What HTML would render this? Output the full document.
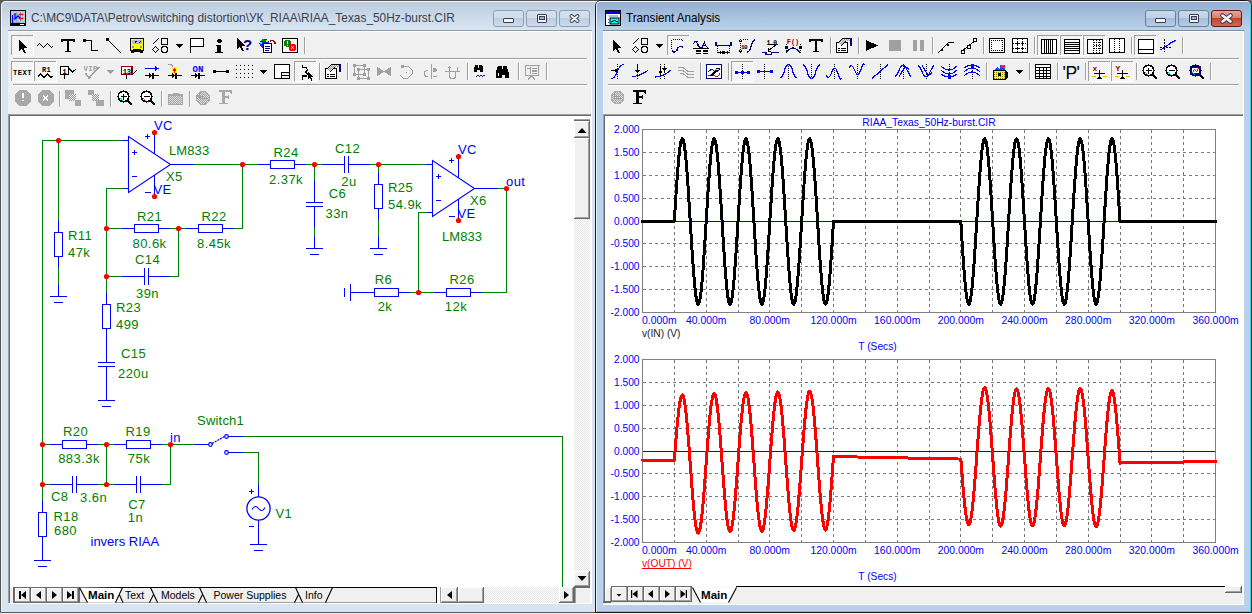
<!DOCTYPE html>
<html><head><meta charset="utf-8"><style>
html,body{margin:0;padding:0;}
body{width:1252px;height:614px;position:relative;overflow:hidden;background:#f0f0f0;font-family:'Liberation Sans', sans-serif;}
</style></head><body>
<div style="position:absolute;left:0;top:0;width:8px;height:8px;background:#5a5a5a"></div>
<div style="position:absolute;left:590px;top:0;width:12px;height:8px;background:#3a3a3a"></div>
<div style="position:absolute;left:1244px;top:0;width:8px;height:8px;background:#6a6a6a"></div>
<div style="position:absolute;left:0;top:0;width:620px;height:613px;box-sizing:border-box;border:1px solid #555;border-radius:6px 6px 0 0;background:#d9e4f1"></div>
<div style="position:absolute;left:1px;top:1px;width:618px;height:611px;box-sizing:border-box;border:1px solid #f2f6fb;border-bottom:none;border-radius:5px 5px 0 0"></div>
<div style="position:absolute;left:2px;top:2px;width:616px;height:28px;background:linear-gradient(#bdcddf,#d8e5f2);border-radius:4px 4px 0 0"></div>
<div style="position:absolute;left:8px;top:30px;width:584px;height:574px;background:#f0f0f0"></div>
<div style="position:absolute;left:8px;top:30px;width:584px;height:1px;background:#8e9aa8"></div>
<div style="position:absolute;left:8px;top:31px;width:584px;height:1px;background:#fff"></div>
<svg style="position:absolute;left:10px;top:10px" width="17" height="16">
<rect x="0.5" y="0.5" width="15" height="15" fill="#d4d0c8" stroke="#000"/>
<rect x="1" y="1" width="14" height="14" fill="#c8c8c8"/>
<path d="M3 4.5H14M3 8.5H14M3 12.5H10M6.5 2V14M10.5 2V12" stroke="#8ca0c0" stroke-width="1"/>
<path d="M2.5 5V13M5 3L5 9L8 6L11 9" stroke="#00f" fill="none" stroke-width="1.3"/>
<path d="M9 4.5H13M9 8.5H13" stroke="#f00" stroke-width="1.3"/>
<rect x="0" y="13" width="16" height="3" fill="#000"/><rect x="10" y="14" width="4" height="1" fill="#fff"/>
</svg>
<div style="position:absolute;left:31px;top:9.5px;font-family:'Liberation Sans', sans-serif;font-size:13.3px;color:#3d3d4a;white-space:pre;transform:scaleX(0.893);transform-origin:0 0">C:\MC9\DATA\Petrov\switching distortion\УК_RIAA\RIAA_Texas_50Hz-burst.CIR</div>
<div style="position:absolute;left:493px;top:10px;width:31px;height:17px;box-sizing:border-box;border:1px solid #8d9db5;border-radius:3px;background:linear-gradient(#d5e1ee 0%,#cfdcea 45%,#bccee2 50%,#cddcec 100%)"></div>
<div style="position:absolute;left:503px;top:18px;width:11px;height:5px;box-sizing:border-box;border:1px solid #3a3e55;background:#f4f4f4;border-radius:1px"></div>
<div style="position:absolute;left:526px;top:10px;width:31px;height:17px;box-sizing:border-box;border:1px solid #8d9db5;border-radius:3px;background:linear-gradient(#d5e1ee 0%,#cfdcea 45%,#bccee2 50%,#cddcec 100%)"></div>
<div style="position:absolute;left:537px;top:14px;width:10px;height:9px;box-sizing:border-box;border:1px solid #3a3e55;background:#f4f4f4;border-radius:1px"></div>
<div style="position:absolute;left:539px;top:16px;width:6px;height:4px;box-sizing:border-box;border:1px solid #3a3e55;background:#9db4d0"></div>
<div style="position:absolute;left:559px;top:10px;width:31px;height:17px;box-sizing:border-box;border:1px solid #8d9db5;border-radius:3px;background:linear-gradient(#d5e1ee 0%,#cfdcea 45%,#bccee2 50%,#cddcec 100%)"></div>
<svg style="position:absolute;left:567px;top:12px" width="15" height="13"><path d="M4.5 4 L10.5 9 M10.5 4 L4.5 9" stroke="#3a3e55" stroke-width="3.8" stroke-linecap="round"/><path d="M4.5 4 L10.5 9 M10.5 4 L4.5 9" stroke="#f4f4f4" stroke-width="2.0" stroke-linecap="round"/></svg>
<div style="position:absolute;left:595px;top:0;width:657px;height:613px;box-sizing:border-box;border:1px solid #1a1a1a;border-radius:6px 6px 0 0;background:#b9d1ea"></div>
<div style="position:absolute;left:596px;top:1px;width:655px;height:611px;box-sizing:border-box;border:1px solid #eaf2fb;border-right-color:#40d4ec;border-bottom-color:#40d4ec;border-radius:5px 5px 0 0"></div>
<div style="position:absolute;left:597px;top:2px;width:653px;height:28px;background:linear-gradient(#93aed0,#bad3ed);border-radius:4px 4px 0 0"></div>
<div style="position:absolute;left:603px;top:30px;width:641px;height:574px;background:#f0f0f0"></div>
<div style="position:absolute;left:603px;top:30px;width:641px;height:1px;background:#7e8b99"></div>
<div style="position:absolute;left:603px;top:31px;width:641px;height:1px;background:#fff"></div>
<svg style="position:absolute;left:605px;top:10px" width="17" height="16">
<rect x="0.5" y="0.5" width="15" height="15" fill="#fff" stroke="#000"/>
<rect x="1" y="1" width="14" height="3" fill="#0000e0"/>
<path d="M3.5 6H13" stroke="#808080"/>
<rect x="5" y="8" width="9" height="6" fill="#00ffff" stroke="#000" stroke-width="1"/>
<path d="M6 12Q9 9 13 12" stroke="#000" fill="none"/>
<path d="M3 9.5h1M3 12.5h1" stroke="#606060"/>
</svg>
<div style="position:absolute;left:626px;top:9.5px;font-family:'Liberation Sans', sans-serif;font-size:13.3px;color:#000;white-space:pre;transform:scaleX(0.877);transform-origin:0 0">Transient Analysis</div>
<div style="position:absolute;left:1145px;top:10px;width:31px;height:17px;box-sizing:border-box;border:1px solid #6b7f99;border-radius:3px;background:linear-gradient(#c9d9ec 0%,#bfd1e7 45%,#a6bed9 50%,#b8cde4 100%)"></div>
<div style="position:absolute;left:1155px;top:18px;width:11px;height:5px;box-sizing:border-box;border:1px solid #3a3e55;background:#f4f4f4;border-radius:1px"></div>
<div style="position:absolute;left:1178px;top:10px;width:31px;height:17px;box-sizing:border-box;border:1px solid #6b7f99;border-radius:3px;background:linear-gradient(#c9d9ec 0%,#bfd1e7 45%,#a6bed9 50%,#b8cde4 100%)"></div>
<div style="position:absolute;left:1189px;top:14px;width:10px;height:9px;box-sizing:border-box;border:1px solid #3a3e55;background:#f4f4f4;border-radius:1px"></div>
<div style="position:absolute;left:1191px;top:16px;width:6px;height:4px;box-sizing:border-box;border:1px solid #3a3e55;background:#9db4d0"></div>
<div style="position:absolute;left:1211px;top:10px;width:31px;height:17px;box-sizing:border-box;border:1px solid #5d1c15;border-radius:3px;background:linear-gradient(#e8a593 0%,#d98068 45%,#c0462c 50%,#d0684c 100%)"></div>
<svg style="position:absolute;left:1219px;top:12px" width="15" height="13"><path d="M3.5 3.5 L11.5 9.5 M11.5 3.5 L3.5 9.5" stroke="#3a3e55" stroke-width="4.6" stroke-linecap="round"/><path d="M3.5 3.5 L11.5 9.5 M11.5 3.5 L3.5 9.5" stroke="#f4f4f4" stroke-width="2.6" stroke-linecap="round"/></svg>
<svg width="1252" height="120" style="position:absolute;left:0;top:0" font-family="'Liberation Sans', sans-serif" shape-rendering="crispEdges"><defs><pattern id="chk" width="2" height="2" patternUnits="userSpaceOnUse"><rect width="2" height="2" fill="#ffffff"/><rect width="1" height="1" fill="#ececec"/><rect x="1" y="1" width="1" height="1" fill="#ececec"/></pattern>
<pattern id="chkg" width="2" height="2" patternUnits="userSpaceOnUse"><rect width="2" height="2" fill="#a0a0a0"/><rect width="1" height="1" fill="#e0e0e0"/><rect x="1" y="1" width="1" height="1" fill="#e0e0e0"/></pattern>
<pattern id="chky" width="2" height="2" patternUnits="userSpaceOnUse"><rect width="2" height="2" fill="#ffff00"/><rect width="1" height="1" fill="#808000"/></pattern></defs><rect x="13" y="58" width="574" height="1" fill="#a0a0a0"/><rect x="13" y="59" width="574" height="1" fill="#fff"/><rect x="13" y="84" width="574" height="1" fill="#a0a0a0"/><rect x="13" y="85" width="574" height="1" fill="#fff"/><rect x="11" y="35" width="23" height="21" fill="url(#chk)"/><rect x="11" y="35" width="22" height="1" fill="#a0a0a0"/><rect x="11" y="35" width="1" height="20" fill="#a0a0a0"/><rect x="11" y="55" width="23" height="1" fill="#fff"/><rect x="33" y="35" width="1" height="21" fill="#fff"/><path d="M19 40v11l2.5-2.5l2.5 5l2-1l-2.5-4.5h3.5z" fill="#000"/><path d="M37 46L39.5 43.5L43.5 47.5L47.5 43.5L51.5 47.5L53 46" stroke="#000" stroke-width="1.1" fill="none" /><path d="M61 39h14v3.3h-1.6l-0.6-1h-3.6v9.5h2.2v1.5h-6.6v-1.5h2.2v-9.5h-3.6l-0.6 1h-1.4z" fill="#000"/><rect x="83" y="39" width="3" height="3" fill="#000"/><path d="M86 40.5h5.5v10h6.5" stroke="#000" stroke-width="1.2" fill="none" /><rect x="106" y="38" width="3" height="3" fill="#000"/><path d="M108.5 40.5L121 53" stroke="#000" stroke-width="1.1" fill="none" /><rect x="130.5" y="38.5" width="13" height="12.5" rx="1.5" fill="#ffff00" stroke="#000" stroke-width="1.3"/><rect x="132" y="40" width="10" height="4" fill="#b8b8d0"/><path d="M133.5 43l1.5-1.5h1.5M138 43l1.5-1.5h1.5" stroke="#000" stroke-width="0.9" fill="none" /><rect x="132" y="46" width="2" height="1.5" fill="#9090c0"/><rect x="140" y="46" width="2" height="1.5" fill="#9090c0"/><rect x="133" y="48.5" width="8" height="1" fill="#000"/><rect x="131" y="51" width="3" height="2" fill="#000"/><rect x="140" y="51" width="3" height="2" fill="#000"/><path d="M152.5 44.5L158.5 38.5" stroke="#000" stroke-width="1.1" fill="none" /><rect x="161.5" y="38.5" width="6" height="6" fill="none" stroke="#000" stroke-width="1.1"/><path d="M155.5 46.5l3 3l-3 3l-3-3z" stroke="#000" stroke-width="1.1" fill="none" /><circle cx="164.5" cy="49.5" r="3.2" fill="none" stroke="#000" stroke-width="1.1"/><path d="M176 44h7l-3.5 4z" fill="#000"/><path d="M190.5 38v15" stroke="#000" stroke-width="1.2" fill="none" /><rect x="190.5" y="38.5" width="13" height="8" fill="#fff" stroke="#000" stroke-width="1.2"/><circle cx="219.5" cy="40.8" r="2.3" fill="#000"/><path d="M216 44.5h5v7h2v1.8h-8v-1.8h1.6v-5.2h-0.6z" fill="#000"/><path d="M237 38v11l2.5-2.5l2.5 5l2-1l-2.5-4.5h3.5z" fill="#000"/><text x="247.5" y="50" fill="#000080" font-size="15" font-weight="bold" letter-spacing="0" text-anchor="middle" font-family="'Liberation Sans', sans-serif">?</text><circle cx="264.5" cy="43.5" r="5" fill="#0030d0"/><path d="M261 41q2-2 4 0M263 45q2 1 3 3" stroke="#00a000" stroke-width="1.6" fill="none" /><rect x="266" y="39.5" width="2" height="2" fill="#ffff00"/><rect x="260" y="42" width="2" height="1.5" fill="#00ffff"/><rect x="263.5" y="43.5" width="8" height="9" fill="#fff" stroke="#000" stroke-width="1"/><path d="M265 46.5h5M265 48.5h5M265 50.5h4" stroke="#000080" stroke-width="1" fill="none" shape-rendering="crispEdges"/><path d="M270 41.5q2.5-2 4.5 0.5" stroke="#a00000" stroke-width="1.3" fill="none" /><path d="M273 43l3-1.5l-0.5 3z" fill="#a00000"/><rect x="282.5" y="38.5" width="15" height="14" fill="#f4f4f4" stroke="#000" stroke-width="1.6"/><circle cx="287.5" cy="43.3" r="3.6" fill="#008000"/><rect x="287" y="40.5" width="1.2" height="3.5" fill="#fff"/><rect x="287" y="45" width="1.2" height="1" fill="#fff"/><circle cx="292.5" cy="47.5" r="3.6" fill="#ff0000"/><path d="M291 46l3 3M294 46l-3 3" stroke="#fff" stroke-width="0.9" fill="none" /><rect x="304" y="37" width="1" height="17" fill="#a0a0a0"/><rect x="305" y="37" width="1" height="17" fill="#fff"/><rect x="11" y="61" width="23" height="21" fill="url(#chk)"/><rect x="11" y="61" width="22" height="1" fill="#a0a0a0"/><rect x="11" y="61" width="1" height="20" fill="#a0a0a0"/><rect x="11" y="81" width="23" height="1" fill="#fff"/><rect x="33" y="61" width="1" height="21" fill="#fff"/><rect x="34" y="61" width="23" height="21" fill="url(#chk)"/><rect x="34" y="61" width="22" height="1" fill="#a0a0a0"/><rect x="34" y="61" width="1" height="20" fill="#a0a0a0"/><rect x="34" y="81" width="23" height="1" fill="#fff"/><rect x="56" y="61" width="1" height="21" fill="#fff"/><text x="22.5" y="75.3" fill="#000" font-size="7.2" font-weight="bold" letter-spacing="0.4" text-anchor="middle" font-family="'Liberation Mono', monospace">TEXT</text><text x="46.5" y="71.8" fill="#000" font-size="7" font-weight="bold" letter-spacing="0.2" text-anchor="middle" font-family="'Liberation Mono', monospace">R1</text><path d="M38 76.5L40.5 74L44 77.5L47.5 74L51 77.5L53.5 75.5" stroke="#000" stroke-width="1" fill="none" /><rect x="60.5" y="66.5" width="8" height="8" fill="#fff" stroke="#000" stroke-width="1.1"/><text x="64.6" y="73.6" fill="#000" font-size="7.5" font-weight="bold" letter-spacing="0" text-anchor="middle" font-family="'Liberation Mono', monospace">1</text><path d="M64.5 75v4" stroke="#000" stroke-width="1.2" fill="none" /><path d="M69 68.5l3.5 3.5l3.5-3" stroke="#000" stroke-width="1" fill="none" /><text x="83.5" y="70.6" fill="#a0a0a0" font-size="7.5" font-weight="bold" letter-spacing="0.3" text-anchor="start" font-family="'Liberation Mono', monospace">VIP</text><path d="M85.5 73.5l3.5 4.5l10-11" stroke="#a0a0a0" stroke-width="1.6" fill="none" /><path d="M107 70h7l-3.5 4z" fill="#a0a0a0"/><rect x="121.5" y="66.5" width="10.5" height="8" fill="#fff" stroke="#800000" stroke-width="1.1"/><text x="126.8" y="73.6" fill="#000" font-size="7.3" font-weight="bold" letter-spacing="-0.4" text-anchor="middle" font-family="'Liberation Mono', monospace">13</text><path d="M126.5 75v4" stroke="#000" stroke-width="1.2" fill="none" /><path d="M132 75l5-5" stroke="#000" stroke-width="1" fill="none" /><path d="M145 68.5h12" stroke="#0000ff" stroke-width="1.3" fill="none" /><path d="M155 66l4 2.5l-4 2.5z" fill="#0000ff"/><path d="M145 75.5h14" stroke="#000" stroke-width="1.2" fill="none" /><path d="M149.0 73.0v5l3.5-2.5z" fill="#000"/><path d="M153.0 72.5v6" stroke="#000" stroke-width="1.3" fill="none" /><path d="M168 64.5h3l2 1.5" stroke="#a0a0a0" stroke-width="1.5" fill="none" /><ellipse cx="174.5" cy="70" rx="2.8" ry="3.5" fill="#ffff00"/><path d="M174.5 67.5l1.8 2.5l-1.8 2.5l-1.8-2.5z" fill="#ff0000"/><path d="M168 75.5h14" stroke="#000" stroke-width="1.2" fill="none" /><path d="M172.0 73.0v5l3.5-2.5z" fill="#000"/><path d="M176.0 72.5v6" stroke="#000" stroke-width="1.3" fill="none" /><text x="198" y="71.8" fill="#0000ff" font-size="9" font-weight="bold" letter-spacing="0.2" text-anchor="middle" font-family="'Liberation Mono', monospace">ON</text><path d="M191 75.5h14" stroke="#000" stroke-width="1.2" fill="none" /><path d="M195.0 73.0v5l3.5-2.5z" fill="#000"/><path d="M199.0 72.5v6" stroke="#000" stroke-width="1.3" fill="none" /><rect x="213" y="70" width="3" height="3" fill="#000"/><rect x="226" y="70" width="3" height="3" fill="#000"/><rect x="216" y="71" width="10" height="1" fill="#000"/><rect x="236" y="65" width="1" height="1" fill="#000"/><rect x="236" y="69" width="1" height="1" fill="#000"/><rect x="236" y="73" width="1" height="1" fill="#000"/><rect x="236" y="77" width="1" height="1" fill="#000"/><rect x="240" y="65" width="1" height="1" fill="#000"/><rect x="240" y="69" width="1" height="1" fill="#000"/><rect x="240" y="73" width="1" height="1" fill="#000"/><rect x="240" y="77" width="1" height="1" fill="#000"/><rect x="244" y="65" width="1" height="1" fill="#000"/><rect x="244" y="69" width="1" height="1" fill="#000"/><rect x="244" y="73" width="1" height="1" fill="#000"/><rect x="244" y="77" width="1" height="1" fill="#000"/><rect x="248" y="65" width="1" height="1" fill="#000"/><rect x="248" y="69" width="1" height="1" fill="#000"/><rect x="248" y="73" width="1" height="1" fill="#000"/><rect x="248" y="77" width="1" height="1" fill="#000"/><rect x="252" y="65" width="1" height="1" fill="#000"/><rect x="252" y="69" width="1" height="1" fill="#000"/><rect x="252" y="73" width="1" height="1" fill="#000"/><rect x="252" y="77" width="1" height="1" fill="#000"/><path d="M260 70h7l-3.5 4z" fill="#000"/><rect x="274.5" y="64.5" width="15" height="14" fill="#fff" stroke="#000" stroke-width="1.6"/><rect x="281.5" y="72.5" width="8" height="6" fill="#f0f0f0" stroke="#000" stroke-width="1.1"/><path d="M281 75.5h8" stroke="#000" stroke-width="1.1" fill="none" /><rect x="294" y="61" width="23" height="21" fill="url(#chk)"/><rect x="294" y="61" width="22" height="1" fill="#a0a0a0"/><rect x="294" y="61" width="1" height="20" fill="#a0a0a0"/><rect x="294" y="81" width="23" height="1" fill="#fff"/><rect x="316" y="61" width="1" height="21" fill="#fff"/><path d="M302.5 65v2.5h3.5l1.5 2.5l-2 2l2 2l-1 2h-4v4" stroke="#000" stroke-width="1.1" fill="none" /><path d="M308 72v7.5l1.8-1.8l1.8 3l1.2-0.7l-1.7-2.8h2.6z" fill="#000"/><rect x="319" y="63" width="1" height="17" fill="#a0a0a0"/><rect x="320" y="63" width="1" height="17" fill="#fff"/><rect x="325.5" y="68.5" width="11" height="10" fill="#fff" stroke="#000" stroke-width="1.6"/><path d="M327 74.5h2M330 74.5h5M327 76.5h2M330 76.5h5" stroke="#000" stroke-width="1" fill="none" /><path d="M327 69l5-5h7v3h-4l-5 5z" fill="url(#chkg)"/><path d="M327 69l5-5h7M330 72l5-5" stroke="#000" stroke-width="1" fill="none" /><rect x="338.5" y="64" width="2.5" height="8" fill="#000080"/><rect x="347" y="63" width="1" height="17" fill="#a0a0a0"/><rect x="348" y="63" width="1" height="17" fill="#fff"/><rect x="353" y="64" width="3" height="3" fill="#a0a0a0"/><rect x="363" y="64" width="3" height="3" fill="#a0a0a0"/><rect x="353" y="73" width="3" height="3" fill="#a0a0a0"/><rect x="363" y="73" width="3" height="3" fill="#a0a0a0"/><rect x="357" y="68" width="3" height="3" fill="#a0a0a0"/><rect x="367" y="68" width="3" height="3" fill="#a0a0a0"/><rect x="357" y="77" width="3" height="3" fill="#a0a0a0"/><rect x="367" y="77" width="3" height="3" fill="#a0a0a0"/><path d="M354.5 65.5h10v9h-10zM358.5 69.5h10v9h-10z" stroke="#a0a0a0" stroke-width="1" fill="none" /><path d="M377 71.5h14M378 68v7l5-3.5zM390 68v7l-5-3.5z" stroke="#a0a0a0" stroke-width="1.1" fill="none" /><path d="M378 68v7l5-3.5zM390 68v7l-5-3.5z" fill="#a0a0a0"/><path d="M402 65.5l2 2M403 66h5l4 4v4l-4 4h-5l-3-3" stroke="#a0a0a0" stroke-width="1" fill="none" /><rect x="401" y="65" width="3" height="3" fill="#a0a0a0"/><rect x="405.5" y="71.5" width="1.5" height="1.5" fill="#a0a0a0"/><path d="M431.5 63.5v15M428 70.5h-1.5l-2 1.5v3l1.5 1.5h2M433 70h2M434 68l3 2l-3 2z" stroke="#a0a0a0" stroke-width="1" fill="none" /><path d="M433 68l4 2l-4 2z" fill="#a0a0a0"/><path d="M433 76h4" stroke="#a0a0a0" stroke-width="1" fill="none" /><path d="M445 71.5h15M449.5 71v6l1.5 1.5h3l1.5-1.5v-5M449.5 71v-4M447.5 68.5l2-2l2 2M457 67v4" stroke="#a0a0a0" stroke-width="1" fill="none" /><rect x="467" y="63" width="1" height="17" fill="#a0a0a0"/><rect x="468" y="63" width="1" height="17" fill="#fff"/><path d="M474 71.5v-3.5l1.5-3.5h2.5v3h1.2v-3h2.5l1.5 3.5v3.5h-3.2v-1.8h-2.8v1.8z" fill="#000"/><path d="M476 76.5l1.5-1l1.5 1l1.5-1l1.5 1l1.5-1l1.5 1" stroke="#000080" stroke-width="0.9" fill="none" /><path d="M496 77.5v-6l2-6h3.5v3h1.5v-3h3.5l2 6v6h-4v-2.5h-2.5v2.5z" fill="#000"/><rect x="497.5" y="73" width="1" height="3" fill="#fff"/><rect x="509" y="73" width="1" height="3" fill="#fff"/><rect x="518" y="63" width="1" height="17" fill="#a0a0a0"/><rect x="519" y="63" width="1" height="17" fill="#fff"/><path d="M524.5 65.5h15M525.5 65.5v10h13v-10M526.5 68.5h3M530.5 67v7M532 68.5h5M532 71h5M532 73.5h5M528 79l3.5-3l3.5 3" stroke="#a0a0a0" stroke-width="1.5" fill="none" /><rect x="546" y="63" width="1" height="17" fill="#a0a0a0"/><rect x="547" y="63" width="1" height="17" fill="#fff"/><path d="M19.0 90h7l4.5 4.5v7l-4.5 4.5h-7l-4.5-4.5v-7z" fill="#a8a8a8"/><rect x="21.5" y="93" width="2" height="5" fill="#fff"/><rect x="21.5" y="99.5" width="2" height="1.5" fill="#fff"/><path d="M42.0 90h7l4.5 4.5v7l-4.5 4.5h-7l-4.5-4.5v-7z" fill="#a8a8a8"/><path d="M43 95.5l5 5M48 95.5l-5 5" stroke="#fff" stroke-width="1.5" fill="none" /><rect x="59" y="91" width="1" height="16" fill="#a0a0a0"/><rect x="60" y="91" width="1" height="16" fill="#fff"/><path d="M65 90h9v4h-4v5h-5z" fill="#a8a8a8"/><rect x="69" y="94" width="7" height="7" fill="url(#chkg)"/><rect x="75" y="100" width="6" height="6" fill="#a8a8a8"/><path d="M88 90h6v5h-6z" fill="#a8a8a8"/><rect x="92" y="94" width="7" height="7" fill="url(#chkg)"/><path d="M96 100h7.5v6h-7.5z" fill="#a8a8a8"/><rect x="110" y="91" width="1" height="16" fill="#a0a0a0"/><rect x="111" y="91" width="1" height="16" fill="#fff"/><circle cx="123.5" cy="96.5" r="5.3" fill="#fff" stroke="#000" stroke-width="1.6"/><path d="M127.0 100.0L132 105" stroke="#000" stroke-width="2.4" fill="none" /><path d="M120.5 96.5h6M123.5 93.5v6" stroke="#000" stroke-width="1.8" fill="none" /><path d="M120.0 98.0q1 2 3 2.5" stroke="#00c0e0" stroke-width="1" fill="none" /><circle cx="146.5" cy="96.5" r="5.3" fill="#fff" stroke="#000" stroke-width="1.6"/><path d="M150.0 100.0L155 105" stroke="#000" stroke-width="2.4" fill="none" /><path d="M143.5 96.5h6" stroke="#000" stroke-width="1.8" fill="none" /><path d="M143.0 98.0q1 2 3 2.5" stroke="#00c0e0" stroke-width="1" fill="none" /><rect x="161" y="91" width="1" height="16" fill="#a0a0a0"/><rect x="162" y="91" width="1" height="16" fill="#fff"/><path d="M168 94h5l1-1.5h4l1 1.5h4v11h-15z" fill="#a8a8a8"/><rect x="169" y="95.5" width="13" height="8" fill="url(#chkg)"/><rect x="189" y="91" width="1" height="16" fill="#a0a0a0"/><rect x="190" y="91" width="1" height="16" fill="#fff"/><circle cx="203" cy="98" r="6.5" fill="url(#chkg)" stroke="#a8a8a8" stroke-width="1.2"/><path d="M199 92.5v6h8M197.5 96h6" stroke="#a0a0a0" stroke-width="1" fill="none" /><path d="M219 90H232V94H230.8L230.2 92H225V96H227.8L228.2 95H229.2V99.2H228.2L227.8 98H225V102.5H227.5V104H219V102.5H221.5V92H219Z" fill="#a8a8a8"/><rect x="608" y="58" width="631" height="1" fill="#a0a0a0"/><rect x="608" y="59" width="631" height="1" fill="#fff"/><rect x="608" y="84" width="631" height="1" fill="#a0a0a0"/><rect x="608" y="85" width="631" height="1" fill="#fff"/><path d="M613 40v11l2.5-2.5l2.5 5l2-1l-2.5-4.5h3.5z" fill="#000"/><path d="M632.5 44.5L638.5 38.5" stroke="#000" stroke-width="1.1" fill="none" /><rect x="641.5" y="38.5" width="6" height="6" fill="none" stroke="#000" stroke-width="1.1"/><path d="M635.5 46.5l3 3l-3 3l-3-3z" stroke="#000" stroke-width="1.1" fill="none" /><circle cx="644.5" cy="49.5" r="3.2" fill="none" stroke="#000" stroke-width="1.1"/><path d="M656 44h7l-3.5 4z" fill="#000"/><rect x="667" y="35" width="23" height="21" fill="url(#chk)"/><rect x="667" y="35" width="22" height="1" fill="#a0a0a0"/><rect x="667" y="35" width="1" height="20" fill="#a0a0a0"/><rect x="667" y="55" width="23" height="1" fill="#fff"/><rect x="689" y="35" width="1" height="21" fill="#fff"/><path d="M671.5 48.5v-9h11v2M671.5 50.5h2M677 50v2" stroke="#000" stroke-width="1" fill="none" stroke-dasharray="1 1"/><path d="M672 50.5q2.5 4 5-1q2.5-5 6-2" stroke="#000080" stroke-width="1.4" fill="none" /><path d="M693.5 44q1.5-4 3.5-1l2.5 4q2 2 3.5-1l1.5-3l1.5 3l2 2" stroke="#000080" stroke-width="1.3" fill="none" /><path d="M697 46v-6M704 46v-6" stroke="#000" stroke-width="1" fill="none" stroke-dasharray="1 1"/><path d="M693 48.5h16M696 51h5M703 51h5" stroke="#000" stroke-width="1.2" fill="none" /><path d="M696 53h5M703 53h5" stroke="#000" stroke-width="1" fill="none" /><path d="M716 41.5v4h15v-4" stroke="#000080" stroke-width="1.3" fill="none" /><path d="M717.5 46v6M729.5 46v6" stroke="#000" stroke-width="1" fill="none" stroke-dasharray="1 1"/><path d="M717 52.5h13M720 51v3M727 51v3" stroke="#000" stroke-width="1" fill="none" /><rect x="722" y="51" width="3" height="3" fill="#000"/><path d="M740.5 41v11M743 39h6" stroke="#000" stroke-width="1" fill="none" stroke-dasharray="1 1"/><text x="744" y="49" fill="#000" font-size="6" font-weight="bold" letter-spacing="-0.5" text-anchor="middle" font-family="'Liberation Mono', monospace">10</text><path d="M747 52.5q3-1 4-6t4-7" stroke="#000080" stroke-width="1.3" fill="none" /><path d="M739 41.5l1.5-2l1.5 2M739 50.5l1.5 2l1.5-2" stroke="#000" stroke-width="1" fill="none" /><text x="771.5" y="44.5" fill="#000" font-size="6.5" font-weight="bold" letter-spacing="-0.5" text-anchor="middle" font-family="'Liberation Mono', monospace">1.0</text><path d="M768 44.5h10M776 45l-8 6M768 51v-3M768 51h3" stroke="#000" stroke-width="1" fill="none" /><path d="M762 52.5h4v2h5.5v-2h7" stroke="#000080" stroke-width="1.2" fill="none" /><text x="793" y="44" fill="#a00000" font-size="7" font-weight="bold" letter-spacing="0" text-anchor="middle" font-family="'Liberation Mono', monospace">F()</text><path d="M786 53q7-10 14 0" stroke="#000080" stroke-width="1.2" fill="none" /><path d="M786.5 44v9M800.5 44v9" stroke="#000" stroke-width="1" fill="none" stroke-dasharray="1 1"/><rect x="785" y="46" width="3" height="3" fill="#000"/><rect x="799" y="46" width="3" height="3" fill="#000"/><path d="M809 39h14v3.3h-1.6l-0.6-1h-3.6v9.5h2.2v1.5h-6.6v-1.5h2.2v-9.5h-3.6l-0.6 1h-1.4z" fill="#000"/><rect x="830" y="37" width="1" height="17" fill="#a0a0a0"/><rect x="831" y="37" width="1" height="17" fill="#fff"/><rect x="836.5" y="42.5" width="11" height="10" fill="#fff" stroke="#000" stroke-width="1.6"/><path d="M838 48.5h2M841 48.5h5M838 50.5h2M841 50.5h5" stroke="#000" stroke-width="1" fill="none" /><path d="M838 43l5-5h7v3h-4l-5 5z" fill="url(#chkg)"/><path d="M838 43l5-5h7M841 46l5-5" stroke="#000" stroke-width="1" fill="none" /><rect x="849.5" y="38" width="2.5" height="8" fill="#000080"/><rect x="858" y="37" width="1" height="17" fill="#a0a0a0"/><rect x="859" y="37" width="1" height="17" fill="#fff"/><path d="M866 40v11l12-5.5z" fill="#000"/><rect x="889" y="40" width="12" height="11" fill="#a0a0a0"/><rect x="913" y="40" width="4" height="11" fill="#a0a0a0"/><rect x="920" y="40" width="4" height="11" fill="#a0a0a0"/><rect x="932" y="37" width="1" height="17" fill="#a0a0a0"/><rect x="933" y="37" width="1" height="17" fill="#fff"/><path d="M938 53l8-8M946 45l2.5-2.5h5.5" stroke="#000" stroke-width="1.1" fill="none" /><rect x="941" y="49" width="2" height="2" fill="#000"/><rect x="946.5" y="43.5" width="2" height="2" fill="#000"/><path d="M962 51l14-11" stroke="#000" stroke-width="1.1" fill="none" /><rect x="961.5" y="50.5" width="3" height="3" fill="#fff" stroke="#000"/><rect x="967.5" y="45.5" width="3" height="3" fill="#fff" stroke="#000"/><rect x="973.5" y="38.5" width="3" height="3" fill="#fff" stroke="#000"/><rect x="983" y="37" width="1" height="17" fill="#a0a0a0"/><rect x="984" y="37" width="1" height="17" fill="#fff"/><rect x="989.5" y="38.5" width="15" height="14" fill="#fff" stroke="#000" stroke-width="1.6"/><path d="M991 40.5h11M991 50.5h11M991.5 40v11M1002.5 40v11" stroke="#000" stroke-width="1" fill="none" stroke-dasharray="1 1"/><rect x="1012.5" y="38.5" width="15" height="14" fill="#fff" stroke="#000" stroke-width="1.6"/><path d="M1017.5 39v13M1022.5 39v13M1013 43.5h14M1013 48.5h14" stroke="#000" stroke-width="1" fill="none" stroke-dasharray="1 1"/><path d="M1016 43.5h3M1021 43.5h3M1016 48.5h3M1021 48.5h3M1017.5 42v3M1022.5 42v3M1017.5 47v3M1022.5 47v3" stroke="#000" stroke-width="1" fill="none" /><rect x="1034" y="37" width="1" height="17" fill="#a0a0a0"/><rect x="1035" y="37" width="1" height="17" fill="#fff"/><rect x="1037" y="35" width="23" height="21" fill="url(#chk)"/><rect x="1037" y="35" width="22" height="1" fill="#a0a0a0"/><rect x="1037" y="35" width="1" height="20" fill="#a0a0a0"/><rect x="1037" y="55" width="23" height="1" fill="#fff"/><rect x="1059" y="35" width="1" height="21" fill="#fff"/><rect x="1041.5" y="39.5" width="15" height="14" fill="#fff" stroke="#000" stroke-width="1.6"/><path d="M1044.5 40v13M1046.5 40v13M1048.5 40v13M1050.5 40v13M1052.5 40v13" stroke="#000" stroke-width="1" fill="none" /><rect x="1060" y="35" width="23" height="21" fill="url(#chk)"/><rect x="1060" y="35" width="22" height="1" fill="#a0a0a0"/><rect x="1060" y="35" width="1" height="20" fill="#a0a0a0"/><rect x="1060" y="55" width="23" height="1" fill="#fff"/><rect x="1082" y="35" width="1" height="21" fill="#fff"/><rect x="1064.5" y="39.5" width="15" height="14" fill="#fff" stroke="#000" stroke-width="1.6"/><path d="M1065 42.5h14M1065 44.5h14M1065 46.5h14M1065 48.5h14M1065 50.5h14" stroke="#000" stroke-width="1" fill="none" /><rect x="1083" y="35" width="23" height="21" fill="url(#chk)"/><rect x="1083" y="35" width="22" height="1" fill="#a0a0a0"/><rect x="1083" y="35" width="1" height="20" fill="#a0a0a0"/><rect x="1083" y="55" width="23" height="1" fill="#fff"/><rect x="1105" y="35" width="1" height="21" fill="#fff"/><rect x="1087.5" y="39.5" width="15" height="14" fill="#fff" stroke="#000" stroke-width="1.6"/><path d="M1093.5 40v13M1096.5 40v13M1099.5 40v13M1094 42.5h8M1094 45.5h8M1094 48.5h8" stroke="#000" stroke-width="1" fill="none" stroke-dasharray="1 1"/><rect x="1109.5" y="38.5" width="15" height="14" fill="#fff" stroke="#000" stroke-width="1.6"/><path d="M1114.5 39v13M1119.5 39v13" stroke="#000" stroke-width="1" fill="none" stroke-dasharray="1 1"/><rect x="1131" y="37" width="1" height="17" fill="#a0a0a0"/><rect x="1132" y="37" width="1" height="17" fill="#fff"/><rect x="1134" y="35" width="23" height="21" fill="url(#chk)"/><rect x="1134" y="35" width="22" height="1" fill="#a0a0a0"/><rect x="1134" y="35" width="1" height="20" fill="#a0a0a0"/><rect x="1134" y="55" width="23" height="1" fill="#fff"/><rect x="1156" y="35" width="1" height="21" fill="#fff"/><rect x="1138.5" y="39.5" width="15" height="14" fill="#fff" stroke="#000" stroke-width="1.6"/><path d="M1138 49.5h16" stroke="#000" stroke-width="1.6" fill="none" /><path d="M1164 39v13M1160 47.5h12" stroke="#000" stroke-width="1" fill="none" stroke-dasharray="1.5 1.5"/><path d="M1160.5 50l6-4q4-3 9.5-6" stroke="#0000ff" stroke-width="1.3" fill="none" /><rect x="1182" y="37" width="1" height="17" fill="#a0a0a0"/><rect x="1183" y="37" width="1" height="17" fill="#fff"/><path d="M617.5 64v15" stroke="#000" stroke-width="1" fill="none" stroke-dasharray="1 1"/><path d="M611 79q4-1 6-7t7-8" stroke="#0000ff" stroke-width="1.2" fill="none" /><path d="M611 70.5h6" stroke="#000" stroke-width="1.2" fill="none" /><path d="M615 68.5l3 2l-3 2z" fill="#000"/><path d="M637.5 64v15" stroke="#000" stroke-width="1" fill="none" stroke-dasharray="1 1"/><path d="M632 76.5q7 0 16-6" stroke="#0000ff" stroke-width="1.2" fill="none" /><path d="M637.5 65v8" stroke="#000" stroke-width="1.2" fill="none" /><path d="M635 70l2.5 3.5l2.5-3.5z" fill="#000"/><path d="M660.5 64v15M664.5 64v15" stroke="#000" stroke-width="1" fill="none" stroke-dasharray="1 1"/><path d="M655 77q8 0 16-7" stroke="#0000ff" stroke-width="1.2" fill="none" /><path d="M660.5 66v8M664.5 66v6" stroke="#000" stroke-width="1.2" fill="none" /><path d="M658 70.5l2.5 3.5l2.5-3.5zM662 68l2.5 3.5l2.5-3.5z" fill="#000"/><path d="M678 67.5h5l5 4h6M678 70.5h5l5 4h6M680 73.5h3l5 4h6" stroke="#a0a0a0" stroke-width="1" fill="none" /><rect x="700" y="63" width="1" height="17" fill="#a0a0a0"/><rect x="701" y="63" width="1" height="17" fill="#fff"/><rect x="706.5" y="64.5" width="15" height="14" fill="#fff" stroke="#00007a" stroke-width="1.6"/><path d="M708 72q3-4 6-1q3 3 6-3" stroke="#0000ff" stroke-width="1" fill="none" /><path d="M708 76q4-3 7 0q3 2 5-3" stroke="#f00" stroke-width="1" fill="none" /><path d="M709 76l7-8h4l-7 8z" fill="#000"/><path d="M710 75l6-6h3" stroke="#fff" stroke-width="0.8" fill="none" /><rect x="728" y="63" width="1" height="17" fill="#a0a0a0"/><rect x="729" y="63" width="1" height="17" fill="#fff"/><rect x="731" y="61" width="23" height="21" fill="url(#chk)"/><rect x="731" y="61" width="22" height="1" fill="#a0a0a0"/><rect x="731" y="61" width="1" height="20" fill="#a0a0a0"/><rect x="731" y="81" width="23" height="1" fill="#fff"/><rect x="753" y="61" width="1" height="21" fill="#fff"/><path d="M742.5 64v15" stroke="#000" stroke-width="1" fill="none" stroke-dasharray="1 1"/><path d="M735 72.5h15" stroke="#0000ff" stroke-width="1.3" fill="none" /><rect x="735" y="71" width="3" height="3" fill="#0000ff"/><rect x="741" y="71" width="3" height="3" fill="#0000ff"/><rect x="747" y="71" width="3" height="3" fill="#0000ff"/><path d="M764.5 64v15" stroke="#000" stroke-width="1" fill="none" stroke-dasharray="1 1"/><path d="M757 71.5h16" stroke="#0000ff" stroke-width="1.3" fill="none" /><rect x="757" y="70" width="3" height="3" fill="#0000ff"/><rect x="770" y="70" width="3" height="3" fill="#0000ff"/><path d="M788.5 64v15" stroke="#000" stroke-width="1" fill="none" stroke-dasharray="1 1"/><path d="M780.5 78.5q3-3 4.5-10q1.5-4 3.5-4q2 0 3.5 4q1.5 7 4.5 10" stroke="#0000ff" stroke-width="1.3" fill="none" /><path d="M811.5 64v15" stroke="#000" stroke-width="1" fill="none" stroke-dasharray="1 1"/><path d="M803.5 64.5q3 3 4.5 10q1.5 4 3.5 4q2 0 3.5-4q1.5-7 4.5-10" stroke="#0000ff" stroke-width="1.3" fill="none" /><path d="M834.5 64v15" stroke="#000" stroke-width="1" fill="none" stroke-dasharray="1 1"/><path d="M826 75q2 4 4 1l2-4l2 -4l2 1q2 4 3.5 9q1 2 2.5 0" stroke="#0000ff" stroke-width="1.3" fill="none" /><path d="M857.5 64v15" stroke="#000" stroke-width="1" fill="none" stroke-dasharray="1 1"/><path d="M849 68q2-4 4-1l2 4l2 4l2-1q2-4 3.5-9q1-2 2.5 0" stroke="#0000ff" stroke-width="1.3" fill="none" /><path d="M880.5 64v15" stroke="#000" stroke-width="1" fill="none" stroke-dasharray="1 1"/><path d="M872 78.5l16-14" stroke="#0000ff" stroke-width="1.3" fill="none" /><path d="M903.5 64v15" stroke="#000" stroke-width="1" fill="none" stroke-dasharray="1 1"/><path d="M895 77q3-3 5-9q3-5 6 0q3 6 5 9M899 77q2-4 4-7q3-5 6 0" stroke="#0000ff" stroke-width="1.2" fill="none" /><path d="M926.5 64v15" stroke="#000" stroke-width="1" fill="none" stroke-dasharray="1 1"/><path d="M918 65q3 3 5 9q3 5 6 0q3-6 5-9M922 65q2 4 4 7q3 5 6 0" stroke="#0000ff" stroke-width="1.2" fill="none" /><path d="M949.5 64v15" stroke="#000" stroke-width="1" fill="none" stroke-dasharray="1 1"/><path d="M941 66q8 8 16 0M941 70q8 8 16 0M941 74q8 6 16 0" stroke="#0000ff" stroke-width="1.2" fill="none" /><circle cx="949.5" cy="77" r="2" fill="#0000ff"/><path d="M972.5 64v15" stroke="#000" stroke-width="1" fill="none" stroke-dasharray="1 1"/><path d="M964 76q8-8 16 0M964 72q8-8 16 0M964 68q8-6 16 0" stroke="#0000ff" stroke-width="1.2" fill="none" /><circle cx="972.5" cy="66" r="2" fill="#0000ff"/><rect x="986" y="63" width="1" height="17" fill="#a0a0a0"/><rect x="987" y="63" width="1" height="17" fill="#fff"/><path d="M993 70h12l2.5 2v6l-2 2h-12.5z" fill="#000"/><rect x="994" y="71" width="11" height="8" fill="url(#chky)"/><rect x="998" y="73" width="3" height="3" fill="#000"/><path d="M995 70l2-3l3 3zM1000 70v-5h5v5z" fill="#2040ff"/><rect x="1000.5" y="65" width="4" height="3" fill="#ff2020"/><path d="M1016 70h7l-3.5 4z" fill="#000"/><rect x="1029" y="63" width="1" height="17" fill="#a0a0a0"/><rect x="1030" y="63" width="1" height="17" fill="#fff"/><rect x="1035.5" y="64.5" width="15" height="14" fill="#fff" stroke="#000" stroke-width="1.6"/><path d="M1036 67.5h14M1036 70.5h14M1036 73.5h14M1036 76.5h14M1039.5 67v11M1043.5 67v11M1046.5 67v11" stroke="#000" stroke-width="1" fill="none" /><rect x="1057" y="63" width="1" height="17" fill="#a0a0a0"/><rect x="1058" y="63" width="1" height="17" fill="#fff"/><text x="1071" y="78.5" fill="#000" font-size="17.5" font-weight="normal" letter-spacing="-0.5" text-anchor="middle" font-family="'Liberation Sans', sans-serif">'P'</text><rect x="1085" y="63" width="1" height="17" fill="#a0a0a0"/><rect x="1086" y="63" width="1" height="17" fill="#fff"/><rect x="1088" y="61" width="23" height="21" fill="url(#chk)"/><rect x="1088" y="61" width="22" height="1" fill="#a0a0a0"/><rect x="1088" y="61" width="1" height="20" fill="#a0a0a0"/><rect x="1088" y="81" width="23" height="1" fill="#fff"/><rect x="1110" y="61" width="1" height="21" fill="#fff"/><rect x="1111" y="61" width="23" height="21" fill="url(#chk)"/><rect x="1111" y="61" width="22" height="1" fill="#a0a0a0"/><rect x="1111" y="61" width="1" height="20" fill="#a0a0a0"/><rect x="1111" y="81" width="23" height="1" fill="#fff"/><rect x="1133" y="61" width="1" height="21" fill="#fff"/><text x="1095" y="70.5" fill="#a00000" font-size="8" font-weight="bold" letter-spacing="0" text-anchor="middle" font-family="'Liberation Mono', monospace">x</text><path d="M1099.5 70v8M1094 73.5h11" stroke="#000" stroke-width="1.1" fill="none" /><path d="M1097 79h5l-2.5-3z" fill="#000"/><path d="M1092 76q2 2 4 0M1103 76q2 2 4 0" stroke="#e0c000" stroke-width="1.2" fill="none" /><text x="1118" y="70.5" fill="#a00000" font-size="8" font-weight="bold" letter-spacing="0" text-anchor="middle" font-family="'Liberation Mono', monospace">Y</text><path d="M1122.5 70v8M1117 73.5h11" stroke="#000" stroke-width="1.1" fill="none" /><path d="M1120 79h5l-2.5-3z" fill="#000"/><path d="M1115 76q2 2 4 0M1126 76q2 2 4 0" stroke="#e0c000" stroke-width="1.2" fill="none" /><rect x="1136" y="63" width="1" height="17" fill="#a0a0a0"/><rect x="1137" y="63" width="1" height="17" fill="#fff"/><circle cx="1148.5" cy="70.5" r="5.3" fill="#fff" stroke="#000" stroke-width="1.6"/><path d="M1152.0 74.0L1157 79" stroke="#000" stroke-width="2.4" fill="none" /><path d="M1145.5 70.5h6M1148.5 67.5v6" stroke="#000" stroke-width="1.8" fill="none" /><path d="M1145.0 72.0q1 2 3 2.5" stroke="#00c0e0" stroke-width="1" fill="none" /><circle cx="1171.5" cy="70.5" r="5.3" fill="#fff" stroke="#000" stroke-width="1.6"/><path d="M1175.0 74.0L1180 79" stroke="#000" stroke-width="2.4" fill="none" /><path d="M1168.5 70.5h6" stroke="#000" stroke-width="1.8" fill="none" /><path d="M1168.0 72.0q1 2 3 2.5" stroke="#00c0e0" stroke-width="1" fill="none" /><circle cx="1195.5" cy="70.5" r="5.3" fill="#fff" stroke="#000" stroke-width="1.6"/><path d="M1199.0 74.0L1204 79" stroke="#000" stroke-width="2.4" fill="none" /><rect x="1191.5" y="67.5" width="8" height="6" fill="#fff"/><path d="M1191.0 67.0h9v7h-9z" stroke="#000080" stroke-width="1.2" fill="none" /><path d="M1192.5 72.5l2-3l2 2l2-3" stroke="#f00" stroke-width="1" fill="none" /><path d="M1192.0 72.0q1 2 3 2.5" stroke="#00c0e0" stroke-width="1" fill="none" /><rect x="1210" y="63" width="1" height="17" fill="#a0a0a0"/><rect x="1211" y="63" width="1" height="17" fill="#fff"/><circle cx="617.5" cy="97.5" r="6.3" fill="url(#chkg)" stroke="#b0b0b0" stroke-width="1.2"/><path d="M614 92.5v6h8M612.5 96h6" stroke="#a0a0a0" stroke-width="1" fill="none" /><path d="M633 90H646V94H644.8L644.2 92H639V96H641.8L642.2 95H643.2V99.2H642.2L641.8 98H639V102.5H641.5V104H633V102.5H635.5V92H633Z" fill="#000"/></svg>
<div style="position:absolute;left:8px;top:114px;width:583px;height:1px;background:#a0a0a0"></div>
<div style="position:absolute;left:8px;top:114px;width:1px;height:489px;background:#a0a0a0"></div>
<div style="position:absolute;left:9px;top:115px;width:582px;height:1px;background:#696969"></div>
<div style="position:absolute;left:9px;top:115px;width:1px;height:488px;background:#696969"></div>
<div style="position:absolute;left:10px;top:116px;width:564px;height:471px;background:#fff;overflow:hidden"><svg width="1252" height="614" style="position:absolute;left:-10px;top:-116px" font-family="'Liberation Sans', sans-serif"><rect x="42" y="140" width="81" height="1" fill="#008000"/><rect x="42" y="140" width="1" height="361" fill="#008000"/><rect x="58" y="140" width="1" height="81" fill="#008000"/><rect x="58" y="220" width="1" height="13" fill="#0000ff"/><rect x="58" y="256" width="1" height="13" fill="#0000ff"/><rect x="54.5" y="232.5" width="8" height="24" fill="none" stroke="#0000ff" stroke-width="1"/><rect x="58" y="268" width="1" height="17" fill="#008000"/><rect x="58" y="284" width="1" height="13" fill="#0000ff"/><rect x="50" y="296" width="17" height="1" fill="#0000ff"/><rect x="54" y="302" width="9" height="1" fill="#0000ff"/><path d="M128.5 136.5V192.5L170.5 164.5Z" fill="none" stroke="#0000ff" stroke-width="1.1"/><rect x="122" y="140" width="7" height="1" fill="#0000ff"/><rect x="122" y="188" width="7" height="1" fill="#0000ff"/><rect x="170" y="164" width="25" height="1" fill="#0000ff"/><rect x="154" y="132" width="1" height="22" fill="#0000ff"/><rect x="154" y="175" width="1" height="22" fill="#0000ff"/><rect x="145" y="136" width="5" height="1" fill="#0000ff"/><rect x="147" y="134" width="1" height="5" fill="#0000ff"/><rect x="145" y="192" width="6" height="1" fill="#0000ff"/><rect x="132" y="152" width="5" height="1" fill="#0000ff"/><rect x="134" y="150" width="1" height="5" fill="#0000ff"/><rect x="132" y="176" width="5" height="1" fill="#0000ff"/><rect x="106" y="188" width="17" height="1" fill="#008000"/><rect x="106" y="188" width="1" height="105" fill="#008000"/><rect x="106" y="228" width="17" height="1" fill="#008000"/><rect x="122" y="228" width="13" height="1" fill="#0000ff"/><rect x="158" y="228" width="13" height="1" fill="#0000ff"/><rect x="134.5" y="224.5" width="24" height="8" fill="none" stroke="#0000ff" stroke-width="1"/><rect x="170" y="228" width="17" height="1" fill="#008000"/><rect x="186" y="228" width="13" height="1" fill="#0000ff"/><rect x="222" y="228" width="13" height="1" fill="#0000ff"/><rect x="198.5" y="224.5" width="24" height="8" fill="none" stroke="#0000ff" stroke-width="1"/><rect x="234" y="228" width="9" height="1" fill="#008000"/><rect x="242" y="164" width="1" height="65" fill="#008000"/><rect x="106" y="276" width="17" height="1" fill="#008000"/><rect x="122" y="276" width="23" height="1" fill="#0000ff"/><rect x="148" y="276" width="23" height="1" fill="#0000ff"/><rect x="144" y="268" width="1" height="17" fill="#0000ff"/><rect x="148" y="268" width="1" height="17" fill="#0000ff"/><rect x="170" y="276" width="9" height="1" fill="#008000"/><rect x="178" y="228" width="1" height="49" fill="#008000"/><rect x="106" y="292" width="1" height="13" fill="#0000ff"/><rect x="106" y="328" width="1" height="13" fill="#0000ff"/><rect x="102.5" y="304.5" width="8" height="24" fill="none" stroke="#0000ff" stroke-width="1"/><rect x="106" y="340" width="1" height="23" fill="#0000ff"/><rect x="106" y="366" width="1" height="23" fill="#0000ff"/><rect x="98" y="362" width="17" height="1" fill="#0000ff"/><rect x="98" y="366" width="17" height="1" fill="#0000ff"/><rect x="106" y="388" width="1" height="13" fill="#0000ff"/><rect x="98" y="400" width="17" height="1" fill="#0000ff"/><rect x="102" y="406" width="9" height="1" fill="#0000ff"/><rect x="194" y="164" width="65" height="1" fill="#008000"/><rect x="258" y="164" width="13" height="1" fill="#0000ff"/><rect x="294" y="164" width="13" height="1" fill="#0000ff"/><rect x="270.5" y="160.5" width="24" height="8" fill="none" stroke="#0000ff" stroke-width="1"/><rect x="306" y="164" width="17" height="1" fill="#008000"/><rect x="322" y="164" width="23" height="1" fill="#0000ff"/><rect x="348" y="164" width="23" height="1" fill="#0000ff"/><rect x="344" y="156" width="1" height="17" fill="#0000ff"/><rect x="348" y="156" width="1" height="17" fill="#0000ff"/><rect x="370" y="164" width="57" height="1" fill="#008000"/><rect x="314" y="164" width="1" height="17" fill="#008000"/><rect x="314" y="180" width="1" height="23" fill="#0000ff"/><rect x="314" y="206" width="1" height="23" fill="#0000ff"/><rect x="306" y="202" width="17" height="1" fill="#0000ff"/><rect x="306" y="206" width="17" height="1" fill="#0000ff"/><rect x="314" y="228" width="1" height="9" fill="#008000"/><rect x="314" y="236" width="1" height="13" fill="#0000ff"/><rect x="306" y="248" width="17" height="1" fill="#0000ff"/><rect x="310" y="254" width="9" height="1" fill="#0000ff"/><rect x="378" y="164" width="1" height="9" fill="#008000"/><rect x="378" y="172" width="1" height="13" fill="#0000ff"/><rect x="378" y="208" width="1" height="13" fill="#0000ff"/><rect x="374.5" y="184.5" width="8" height="24" fill="none" stroke="#0000ff" stroke-width="1"/><rect x="378" y="220" width="1" height="17" fill="#008000"/><rect x="378" y="236" width="1" height="13" fill="#0000ff"/><rect x="370" y="248" width="17" height="1" fill="#0000ff"/><rect x="374" y="254" width="9" height="1" fill="#0000ff"/><path d="M432.5 160.5V216.5L474.5 188.5Z" fill="none" stroke="#0000ff" stroke-width="1.1"/><rect x="426" y="164" width="7" height="1" fill="#0000ff"/><rect x="426" y="212" width="7" height="1" fill="#0000ff"/><rect x="474" y="188" width="25" height="1" fill="#0000ff"/><rect x="458" y="156" width="1" height="22" fill="#0000ff"/><rect x="458" y="199" width="1" height="22" fill="#0000ff"/><rect x="449" y="160" width="5" height="1" fill="#0000ff"/><rect x="451" y="158" width="1" height="5" fill="#0000ff"/><rect x="449" y="216" width="6" height="1" fill="#0000ff"/><rect x="436" y="176" width="5" height="1" fill="#0000ff"/><rect x="438" y="174" width="1" height="5" fill="#0000ff"/><rect x="436" y="200" width="5" height="1" fill="#0000ff"/><rect x="418" y="212" width="9" height="1" fill="#008000"/><rect x="418" y="212" width="1" height="81" fill="#008000"/><rect x="350" y="284" width="1" height="17" fill="#0000ff"/><rect x="344" y="288" width="1" height="9" fill="#0000ff"/><rect x="350" y="292" width="13" height="1" fill="#0000ff"/><rect x="362" y="292" width="13" height="1" fill="#0000ff"/><rect x="398" y="292" width="13" height="1" fill="#0000ff"/><rect x="374.5" y="288.5" width="24" height="8" fill="none" stroke="#0000ff" stroke-width="1"/><rect x="410" y="292" width="25" height="1" fill="#008000"/><rect x="434" y="292" width="13" height="1" fill="#0000ff"/><rect x="470" y="292" width="13" height="1" fill="#0000ff"/><rect x="446.5" y="288.5" width="24" height="8" fill="none" stroke="#0000ff" stroke-width="1"/><rect x="482" y="292" width="25" height="1" fill="#008000"/><rect x="506" y="188" width="1" height="105" fill="#008000"/><rect x="498" y="188" width="9" height="1" fill="#008000"/><rect x="42" y="444" width="9" height="1" fill="#008000"/><rect x="50" y="444" width="13" height="1" fill="#0000ff"/><rect x="86" y="444" width="13" height="1" fill="#0000ff"/><rect x="62.5" y="440.5" width="24" height="8" fill="none" stroke="#0000ff" stroke-width="1"/><rect x="98" y="444" width="17" height="1" fill="#008000"/><rect x="114" y="444" width="13" height="1" fill="#0000ff"/><rect x="150" y="444" width="13" height="1" fill="#0000ff"/><rect x="126.5" y="440.5" width="24" height="8" fill="none" stroke="#0000ff" stroke-width="1"/><rect x="162" y="444" width="33" height="1" fill="#008000"/><rect x="106" y="444" width="1" height="41" fill="#008000"/><rect x="42" y="484" width="9" height="1" fill="#008000"/><rect x="50" y="484" width="23" height="1" fill="#0000ff"/><rect x="76" y="484" width="23" height="1" fill="#0000ff"/><rect x="72" y="476" width="1" height="17" fill="#0000ff"/><rect x="76" y="476" width="1" height="17" fill="#0000ff"/><rect x="98" y="484" width="17" height="1" fill="#008000"/><rect x="114" y="484" width="23" height="1" fill="#0000ff"/><rect x="140" y="484" width="23" height="1" fill="#0000ff"/><rect x="136" y="476" width="1" height="17" fill="#0000ff"/><rect x="140" y="476" width="1" height="17" fill="#0000ff"/><rect x="162" y="484" width="9" height="1" fill="#008000"/><rect x="170" y="444" width="1" height="41" fill="#008000"/><rect x="42" y="500" width="1" height="13" fill="#0000ff"/><rect x="42" y="536" width="1" height="13" fill="#0000ff"/><rect x="38.5" y="512.5" width="8" height="24" fill="none" stroke="#0000ff" stroke-width="1"/><rect x="42" y="548" width="1" height="13" fill="#0000ff"/><rect x="34" y="560" width="17" height="1" fill="#0000ff"/><rect x="38" y="566" width="9" height="1" fill="#0000ff"/><rect x="194" y="444" width="15" height="1" fill="#0000ff"/><circle cx="210.5" cy="444.5" r="1.8" fill="none" stroke="#0000ff" stroke-width="1.2"/><path d="M212 443.5L224.5 436.5" stroke="#0000ff" stroke-width="1.2" stroke-dasharray="2.2 0.8"/><circle cx="226.5" cy="436.5" r="1.8" fill="none" stroke="#0000ff" stroke-width="1.2"/><circle cx="226.5" cy="452.5" r="1.8" fill="none" stroke="#0000ff" stroke-width="1.2"/><rect x="228" y="436" width="16" height="1" fill="#0000ff"/><rect x="243" y="436" width="320" height="1" fill="#008000"/><rect x="562" y="436" width="1" height="165" fill="#008000"/><rect x="228" y="452" width="16" height="1" fill="#0000ff"/><rect x="243" y="452" width="16" height="1" fill="#008000"/><rect x="258" y="452" width="1" height="33" fill="#008000"/><rect x="258" y="484" width="1" height="13" fill="#0000ff"/><circle cx="258.5" cy="508.5" r="11.6" fill="none" stroke="#0000ff" stroke-width="1.3"/><path d="M252 509.5Q255 504 258.5 508.5T265 507.5" fill="none" stroke="#0000ff" stroke-width="1.1"/><rect x="258" y="520" width="1" height="25" fill="#0000ff"/><rect x="250" y="544" width="17" height="1" fill="#0000ff"/><rect x="254" y="550" width="9" height="1" fill="#0000ff"/><rect x="249" y="491" width="5" height="1" fill="#0000ff"/><rect x="251" y="489" width="1" height="5" fill="#0000ff"/><rect x="249" y="526" width="5" height="1" fill="#0000ff"/><circle cx="58.5" cy="140.5" r="2.6" fill="#ff0000"/><circle cx="154.5" cy="132.5" r="2.6" fill="#ff0000"/><circle cx="154.5" cy="196.5" r="2.6" fill="#ff0000"/><circle cx="178.5" cy="228.5" r="2.6" fill="#ff0000"/><circle cx="106.5" cy="228.5" r="2.6" fill="#ff0000"/><circle cx="106.5" cy="276.5" r="2.6" fill="#ff0000"/><circle cx="242.5" cy="164.5" r="2.6" fill="#ff0000"/><circle cx="314.5" cy="164.5" r="2.6" fill="#ff0000"/><circle cx="378.5" cy="164.5" r="2.6" fill="#ff0000"/><circle cx="458.5" cy="156.5" r="2.6" fill="#ff0000"/><circle cx="458.5" cy="220.5" r="2.6" fill="#ff0000"/><circle cx="418.5" cy="292.5" r="2.6" fill="#ff0000"/><circle cx="506.5" cy="188.5" r="2.6" fill="#ff0000"/><circle cx="106.5" cy="444.5" r="2.6" fill="#ff0000"/><circle cx="170.5" cy="444.5" r="2.6" fill="#ff0000"/><circle cx="42.5" cy="444.5" r="2.6" fill="#ff0000"/><circle cx="106.5" cy="484.5" r="2.6" fill="#ff0000"/><circle cx="42.5" cy="484.5" r="2.6" fill="#ff0000"/><text x="154" y="130" fill="#0000ff" font-size="13" text-anchor="start" letter-spacing="0.45">VC</text><text x="153.5" y="194" fill="#0000ff" font-size="13" text-anchor="start" letter-spacing="0.45">VE</text><text x="169" y="155" fill="#008000" font-size="13" text-anchor="start" letter-spacing="0.1">LM833</text><text x="166" y="181" fill="#008000" font-size="13" text-anchor="start" letter-spacing="0.45">X5</text><text x="286" y="157" fill="#008000" font-size="13" text-anchor="middle" letter-spacing="0.45">R24</text><text x="286" y="184" fill="#008000" font-size="13" text-anchor="middle" letter-spacing="0.45">2.37k</text><text x="149.5" y="221" fill="#008000" font-size="13" text-anchor="middle" letter-spacing="0.45">R21</text><text x="149.5" y="248" fill="#008000" font-size="13" text-anchor="middle" letter-spacing="0.45">80.6k</text><text x="214" y="221" fill="#008000" font-size="13" text-anchor="middle" letter-spacing="0.45">R22</text><text x="214" y="248" fill="#008000" font-size="13" text-anchor="middle" letter-spacing="0.45">8.45k</text><text x="147.5" y="264" fill="#008000" font-size="13" text-anchor="middle" letter-spacing="0.45">C14</text><text x="147.5" y="298" fill="#008000" font-size="13" text-anchor="middle" letter-spacing="0.45">39n</text><text x="68" y="240" fill="#008000" font-size="13" text-anchor="start" letter-spacing="0.45">R11</text><text x="68" y="257" fill="#008000" font-size="13" text-anchor="start" letter-spacing="0.45">47k</text><text x="116" y="312" fill="#008000" font-size="13" text-anchor="start" letter-spacing="0.45">R23</text><text x="116" y="329" fill="#008000" font-size="13" text-anchor="start" letter-spacing="0.45">499</text><text x="121" y="357.5" fill="#008000" font-size="13" text-anchor="start" letter-spacing="0.45">C15</text><text x="118" y="377.5" fill="#008000" font-size="13" text-anchor="start" letter-spacing="0.45">220u</text><text x="347.5" y="152.5" fill="#008000" font-size="13" text-anchor="middle" letter-spacing="0.45">C12</text><text x="349" y="186" fill="#008000" font-size="13" text-anchor="middle" letter-spacing="0.45">2u</text><text x="337.5" y="198" fill="#008000" font-size="13" text-anchor="middle" letter-spacing="0.45">C6</text><text x="337" y="218" fill="#008000" font-size="13" text-anchor="middle" letter-spacing="0.45">33n</text><text x="388" y="192" fill="#008000" font-size="13" text-anchor="start" letter-spacing="0.45">R25</text><text x="388" y="209" fill="#008000" font-size="13" text-anchor="start" letter-spacing="0.45">54.9k</text><text x="458" y="153.5" fill="#0000ff" font-size="13" text-anchor="start" letter-spacing="0.45">VC</text><text x="506" y="186" fill="#0000ff" font-size="13" text-anchor="start" letter-spacing="0.45">out</text><text x="470" y="204.5" fill="#008000" font-size="13" text-anchor="start" letter-spacing="0.45">X6</text><text x="457.5" y="218" fill="#0000ff" font-size="13" text-anchor="start" letter-spacing="0.45">VE</text><text x="462" y="240.8" fill="#008000" font-size="13" text-anchor="middle" letter-spacing="0.1">LM833</text><text x="383.5" y="284" fill="#008000" font-size="13" text-anchor="middle" letter-spacing="0.45">R6</text><text x="385" y="311" fill="#008000" font-size="13" text-anchor="middle" letter-spacing="0.45">2k</text><text x="462" y="284" fill="#008000" font-size="13" text-anchor="middle" letter-spacing="0.45">R26</text><text x="456" y="311" fill="#008000" font-size="13" text-anchor="middle" letter-spacing="0.45">12k</text><text x="75.5" y="435.5" fill="#008000" font-size="13" text-anchor="middle" letter-spacing="0.45">R20</text><text x="79" y="462.5" fill="#008000" font-size="13" text-anchor="middle" letter-spacing="0.45">883.3k</text><text x="138" y="435.5" fill="#008000" font-size="13" text-anchor="middle" letter-spacing="0.45">R19</text><text x="139" y="462.5" fill="#008000" font-size="13" text-anchor="middle" letter-spacing="0.45">75k</text><text x="170" y="441.5" fill="#0000ff" font-size="13" text-anchor="start" letter-spacing="0.45">in</text><text x="51" y="501" fill="#008000" font-size="13" text-anchor="start" letter-spacing="0.45">C8</text><text x="80" y="502" fill="#008000" font-size="13" text-anchor="start" letter-spacing="0.45">3.6n</text><text x="137" y="509" fill="#008000" font-size="13" text-anchor="middle" letter-spacing="0.45">C7</text><text x="135.5" y="522" fill="#008000" font-size="13" text-anchor="middle" letter-spacing="0.45">1n</text><text x="53.5" y="521" fill="#008000" font-size="13" text-anchor="start" letter-spacing="0.45">R18</text><text x="54" y="535" fill="#008000" font-size="13" text-anchor="start" letter-spacing="0.45">680</text><text x="90.5" y="546" fill="#0000ff" font-size="13" text-anchor="start" letter-spacing="0">invers RIAA</text><text x="220.5" y="425" fill="#008000" font-size="13" text-anchor="middle" letter-spacing="0.2">Switch1</text><text x="275.5" y="518" fill="#008000" font-size="13" text-anchor="start" letter-spacing="0.45">V1</text></svg></div>
<div style="position:absolute;left:603px;top:114px;width:641px;height:473px;background:#a0a0a0"></div>
<div style="position:absolute;left:604px;top:115px;width:640px;height:472px;background:#696969"></div>
<div style="position:absolute;left:605px;top:116px;width:639px;height:471px;background:#fff;overflow:hidden"><svg width="1252" height="614" style="position:absolute;left:-605px;top:-116px" font-family="'Liberation Sans', sans-serif"><text x="929" y="126" text-anchor="middle" fill="#0000ff" font-size="10.3">RIAA_Texas_50Hz-burst.CIR</text><line x1="674.5" y1="130" x2="674.5" y2="312" stroke="#7a7a7a" stroke-width="1" stroke-dasharray="3 3" shape-rendering="crispEdges"/><line x1="706.5" y1="130" x2="706.5" y2="312" stroke="#7a7a7a" stroke-width="1" stroke-dasharray="3 3" shape-rendering="crispEdges"/><line x1="738.5" y1="130" x2="738.5" y2="312" stroke="#7a7a7a" stroke-width="1" stroke-dasharray="3 3" shape-rendering="crispEdges"/><line x1="769.5" y1="130" x2="769.5" y2="312" stroke="#7a7a7a" stroke-width="1" stroke-dasharray="3 3" shape-rendering="crispEdges"/><line x1="801.5" y1="130" x2="801.5" y2="312" stroke="#7a7a7a" stroke-width="1" stroke-dasharray="3 3" shape-rendering="crispEdges"/><line x1="833.5" y1="130" x2="833.5" y2="312" stroke="#7a7a7a" stroke-width="1" stroke-dasharray="3 3" shape-rendering="crispEdges"/><line x1="865.5" y1="130" x2="865.5" y2="312" stroke="#7a7a7a" stroke-width="1" stroke-dasharray="3 3" shape-rendering="crispEdges"/><line x1="897.5" y1="130" x2="897.5" y2="312" stroke="#7a7a7a" stroke-width="1" stroke-dasharray="3 3" shape-rendering="crispEdges"/><line x1="929.5" y1="130" x2="929.5" y2="312" stroke="#7a7a7a" stroke-width="1" stroke-dasharray="3 3" shape-rendering="crispEdges"/><line x1="960.5" y1="130" x2="960.5" y2="312" stroke="#7a7a7a" stroke-width="1" stroke-dasharray="3 3" shape-rendering="crispEdges"/><line x1="992.5" y1="130" x2="992.5" y2="312" stroke="#7a7a7a" stroke-width="1" stroke-dasharray="3 3" shape-rendering="crispEdges"/><line x1="1024.5" y1="130" x2="1024.5" y2="312" stroke="#7a7a7a" stroke-width="1" stroke-dasharray="3 3" shape-rendering="crispEdges"/><line x1="1056.5" y1="130" x2="1056.5" y2="312" stroke="#7a7a7a" stroke-width="1" stroke-dasharray="3 3" shape-rendering="crispEdges"/><line x1="1088.5" y1="130" x2="1088.5" y2="312" stroke="#7a7a7a" stroke-width="1" stroke-dasharray="3 3" shape-rendering="crispEdges"/><line x1="1120.5" y1="130" x2="1120.5" y2="312" stroke="#7a7a7a" stroke-width="1" stroke-dasharray="3 3" shape-rendering="crispEdges"/><line x1="1151.5" y1="130" x2="1151.5" y2="312" stroke="#7a7a7a" stroke-width="1" stroke-dasharray="3 3" shape-rendering="crispEdges"/><line x1="1183.5" y1="130" x2="1183.5" y2="312" stroke="#7a7a7a" stroke-width="1" stroke-dasharray="3 3" shape-rendering="crispEdges"/><line x1="643" y1="152.5" x2="1215" y2="152.5" stroke="#7a7a7a" stroke-width="1" stroke-dasharray="3 3" shape-rendering="crispEdges"/><line x1="643" y1="175.5" x2="1215" y2="175.5" stroke="#7a7a7a" stroke-width="1" stroke-dasharray="3 3" shape-rendering="crispEdges"/><line x1="643" y1="198.5" x2="1215" y2="198.5" stroke="#7a7a7a" stroke-width="1" stroke-dasharray="3 3" shape-rendering="crispEdges"/><line x1="643" y1="221.5" x2="1215" y2="221.5" stroke="#7a7a7a" stroke-width="1" stroke-dasharray="3 3" shape-rendering="crispEdges"/><line x1="643" y1="243.5" x2="1215" y2="243.5" stroke="#7a7a7a" stroke-width="1" stroke-dasharray="3 3" shape-rendering="crispEdges"/><line x1="643" y1="266.5" x2="1215" y2="266.5" stroke="#7a7a7a" stroke-width="1" stroke-dasharray="3 3" shape-rendering="crispEdges"/><line x1="643" y1="289.5" x2="1215" y2="289.5" stroke="#7a7a7a" stroke-width="1" stroke-dasharray="3 3" shape-rendering="crispEdges"/><rect x="642.5" y="129.5" width="573" height="183" fill="none" stroke="#808080" stroke-width="1" shape-rendering="crispEdges"/><rect x="643" y="221" width="572" height="1" fill="#0000ff"/><polyline points="642.50,221.50 643.30,221.50 644.09,221.50 644.89,221.50 645.68,221.50 646.48,221.50 647.27,221.50 648.07,221.50 648.87,221.50 649.66,221.50 650.46,221.50 651.25,221.50 652.05,221.50 652.85,221.50 653.64,221.50 654.44,221.50 655.23,221.50 656.03,221.50 656.83,221.50 657.62,221.50 658.42,221.50 659.21,221.50 660.01,221.50 660.80,221.50 661.60,221.50 662.40,221.50 663.19,221.50 663.99,221.50 664.78,221.50 665.58,221.50 666.38,221.50 667.17,221.50 667.97,221.50 668.76,221.50 669.56,221.50 670.35,221.50 671.15,221.50 671.95,221.50 672.74,221.50 673.54,221.50 674.33,221.50 675.13,208.55 675.92,195.91 676.72,183.91 677.52,172.83 678.31,162.95 679.11,154.51 679.90,147.72 680.70,142.75 681.50,139.71 682.29,138.69 683.09,139.71 683.88,142.75 684.68,147.72 685.48,154.51 686.27,162.95 687.07,172.83 687.86,183.91 688.66,195.91 689.45,208.55 690.25,221.50 691.05,234.45 691.84,247.09 692.64,259.09 693.43,270.17 694.23,280.05 695.02,288.49 695.82,295.28 696.62,300.25 697.41,303.29 698.21,304.31 699.00,303.29 699.80,300.25 700.60,295.28 701.39,288.49 702.19,280.05 702.98,270.17 703.78,259.09 704.58,247.09 705.37,234.45 706.17,221.50 706.96,208.55 707.76,195.91 708.55,183.91 709.35,172.83 710.15,162.95 710.94,154.51 711.74,147.72 712.53,142.75 713.33,139.71 714.12,138.69 714.92,139.71 715.72,142.75 716.51,147.72 717.31,154.51 718.10,162.95 718.90,172.83 719.70,183.91 720.49,195.91 721.29,208.55 722.08,221.50 722.88,234.45 723.67,247.09 724.47,259.09 725.27,270.17 726.06,280.05 726.86,288.49 727.65,295.28 728.45,300.25 729.25,303.29 730.04,304.31 730.84,303.29 731.63,300.25 732.43,295.28 733.23,288.49 734.02,280.05 734.82,270.17 735.61,259.09 736.41,247.09 737.20,234.45 738.00,221.50 738.80,208.55 739.59,195.91 740.39,183.91 741.18,172.83 741.98,162.95 742.77,154.51 743.57,147.72 744.37,142.75 745.16,139.71 745.96,138.69 746.75,139.71 747.55,142.75 748.35,147.72 749.14,154.51 749.94,162.95 750.73,172.83 751.53,183.91 752.33,195.91 753.12,208.55 753.92,221.50 754.71,234.45 755.51,247.09 756.30,259.09 757.10,270.17 757.90,280.05 758.69,288.49 759.49,295.28 760.28,300.25 761.08,303.29 761.88,304.31 762.67,303.29 763.47,300.25 764.26,295.28 765.06,288.49 765.85,280.05 766.65,270.17 767.45,259.09 768.24,247.09 769.04,234.45 769.83,221.50 770.63,208.55 771.42,195.91 772.22,183.91 773.02,172.83 773.81,162.95 774.61,154.51 775.40,147.72 776.20,142.75 777.00,139.71 777.79,138.69 778.59,139.71 779.38,142.75 780.18,147.72 780.98,154.51 781.77,162.95 782.57,172.83 783.36,183.91 784.16,195.91 784.95,208.55 785.75,221.50 786.55,234.45 787.34,247.09 788.14,259.09 788.93,270.17 789.73,280.05 790.52,288.49 791.32,295.28 792.12,300.25 792.91,303.29 793.71,304.31 794.50,303.29 795.30,300.25 796.10,295.28 796.89,288.49 797.69,280.05 798.48,270.17 799.28,259.09 800.08,247.09 800.87,234.45 801.67,221.50 802.46,208.55 803.26,195.91 804.05,183.91 804.85,172.83 805.65,162.95 806.44,154.51 807.24,147.72 808.03,142.75 808.83,139.71 809.62,138.69 810.42,139.71 811.22,142.75 812.01,147.72 812.81,154.51 813.60,162.95 814.40,172.83 815.20,183.91 815.99,195.91 816.79,208.55 817.58,221.50 818.38,234.45 819.17,247.09 819.97,259.09 820.77,270.17 821.56,280.05 822.36,288.49 823.15,295.28 823.95,300.25 824.75,303.29 825.54,304.31 826.34,303.29 827.13,300.25 827.93,295.28 828.73,288.49 829.52,280.05 830.32,270.17 831.11,259.09 831.91,247.09 832.70,234.45 833.50,221.50 834.30,221.50 835.09,221.50 835.89,221.50 836.68,221.50 837.48,221.50 838.27,221.50 839.07,221.50 839.87,221.50 840.66,221.50 841.46,221.50 842.25,221.50 843.05,221.50 843.85,221.50 844.64,221.50 845.44,221.50 846.23,221.50 847.03,221.50 847.83,221.50 848.62,221.50 849.42,221.50 850.21,221.50 851.01,221.50 851.80,221.50 852.60,221.50 853.40,221.50 854.19,221.50 854.99,221.50 855.78,221.50 856.58,221.50 857.38,221.50 858.17,221.50 858.97,221.50 859.76,221.50 860.56,221.50 861.35,221.50 862.15,221.50 862.95,221.50 863.74,221.50 864.54,221.50 865.33,221.50 866.13,221.50 866.92,221.50 867.72,221.50 868.52,221.50 869.31,221.50 870.11,221.50 870.90,221.50 871.70,221.50 872.50,221.50 873.29,221.50 874.09,221.50 874.88,221.50 875.68,221.50 876.48,221.50 877.27,221.50 878.07,221.50 878.86,221.50 879.66,221.50 880.45,221.50 881.25,221.50 882.05,221.50 882.84,221.50 883.64,221.50 884.43,221.50 885.23,221.50 886.02,221.50 886.82,221.50 887.62,221.50 888.41,221.50 889.21,221.50 890.00,221.50 890.80,221.50 891.60,221.50 892.39,221.50 893.19,221.50 893.98,221.50 894.78,221.50 895.58,221.50 896.37,221.50 897.17,221.50 897.96,221.50 898.76,221.50 899.55,221.50 900.35,221.50 901.15,221.50 901.94,221.50 902.74,221.50 903.53,221.50 904.33,221.50 905.12,221.50 905.92,221.50 906.72,221.50 907.51,221.50 908.31,221.50 909.10,221.50 909.90,221.50 910.70,221.50 911.49,221.50 912.29,221.50 913.08,221.50 913.88,221.50 914.67,221.50 915.47,221.50 916.27,221.50 917.06,221.50 917.86,221.50 918.65,221.50 919.45,221.50 920.25,221.50 921.04,221.50 921.84,221.50 922.63,221.50 923.43,221.50 924.22,221.50 925.02,221.50 925.82,221.50 926.61,221.50 927.41,221.50 928.20,221.50 929.00,221.50 929.80,221.50 930.59,221.50 931.39,221.50 932.18,221.50 932.98,221.50 933.77,221.50 934.57,221.50 935.37,221.50 936.16,221.50 936.96,221.50 937.75,221.50 938.55,221.50 939.35,221.50 940.14,221.50 940.94,221.50 941.73,221.50 942.53,221.50 943.33,221.50 944.12,221.50 944.92,221.50 945.71,221.50 946.51,221.50 947.30,221.50 948.10,221.50 948.90,221.50 949.69,221.50 950.49,221.50 951.28,221.50 952.08,221.50 952.88,221.50 953.67,221.50 954.47,221.50 955.26,221.50 956.06,221.50 956.85,221.50 957.65,221.50 958.45,221.50 959.24,221.50 960.04,221.50 960.83,221.50 961.63,234.45 962.42,247.09 963.22,259.09 964.02,270.17 964.81,280.05 965.61,288.49 966.40,295.28 967.20,300.25 968.00,303.29 968.79,304.31 969.59,303.29 970.38,300.25 971.18,295.28 971.97,288.49 972.77,280.05 973.57,270.17 974.36,259.09 975.16,247.09 975.95,234.45 976.75,221.50 977.55,208.55 978.34,195.91 979.14,183.91 979.93,172.83 980.73,162.95 981.52,154.51 982.32,147.72 983.12,142.75 983.91,139.71 984.71,138.69 985.50,139.71 986.30,142.75 987.10,147.72 987.89,154.51 988.69,162.95 989.48,172.83 990.28,183.91 991.08,195.91 991.87,208.55 992.67,221.50 993.46,234.45 994.26,247.09 995.05,259.09 995.85,270.17 996.65,280.05 997.44,288.49 998.24,295.28 999.03,300.25 999.83,303.29 1000.62,304.31 1001.42,303.29 1002.22,300.25 1003.01,295.28 1003.81,288.49 1004.60,280.05 1005.40,270.17 1006.20,259.09 1006.99,247.09 1007.79,234.45 1008.58,221.50 1009.38,208.55 1010.17,195.91 1010.97,183.91 1011.77,172.83 1012.56,162.95 1013.36,154.51 1014.15,147.72 1014.95,142.75 1015.75,139.71 1016.54,138.69 1017.34,139.71 1018.13,142.75 1018.93,147.72 1019.72,154.51 1020.52,162.95 1021.32,172.83 1022.11,183.91 1022.91,195.91 1023.70,208.55 1024.50,221.50 1025.30,234.45 1026.09,247.09 1026.89,259.09 1027.68,270.17 1028.48,280.05 1029.28,288.49 1030.07,295.28 1030.87,300.25 1031.66,303.29 1032.46,304.31 1033.25,303.29 1034.05,300.25 1034.85,295.28 1035.64,288.49 1036.44,280.05 1037.23,270.17 1038.03,259.09 1038.83,247.09 1039.62,234.45 1040.42,221.50 1041.21,208.55 1042.01,195.91 1042.80,183.91 1043.60,172.83 1044.40,162.95 1045.19,154.51 1045.99,147.72 1046.78,142.75 1047.58,139.71 1048.38,138.69 1049.17,139.71 1049.97,142.75 1050.76,147.72 1051.56,154.51 1052.35,162.95 1053.15,172.83 1053.95,183.91 1054.74,195.91 1055.54,208.55 1056.33,221.50 1057.13,234.45 1057.92,247.09 1058.72,259.09 1059.52,270.17 1060.31,280.05 1061.11,288.49 1061.90,295.28 1062.70,300.25 1063.50,303.29 1064.29,304.31 1065.09,303.29 1065.88,300.25 1066.68,295.28 1067.47,288.49 1068.27,280.05 1069.07,270.17 1069.86,259.09 1070.66,247.09 1071.45,234.45 1072.25,221.50 1073.05,208.55 1073.84,195.91 1074.64,183.91 1075.43,172.83 1076.23,162.95 1077.03,154.51 1077.82,147.72 1078.62,142.75 1079.41,139.71 1080.21,138.69 1081.00,139.71 1081.80,142.75 1082.60,147.72 1083.39,154.51 1084.19,162.95 1084.98,172.83 1085.78,183.91 1086.58,195.91 1087.37,208.55 1088.17,221.50 1088.96,234.45 1089.76,247.09 1090.55,259.09 1091.35,270.17 1092.15,280.05 1092.94,288.49 1093.74,295.28 1094.53,300.25 1095.33,303.29 1096.12,304.31 1096.92,303.29 1097.72,300.25 1098.51,295.28 1099.31,288.49 1100.10,280.05 1100.90,270.17 1101.70,259.09 1102.49,247.09 1103.29,234.45 1104.08,221.50 1104.88,208.55 1105.67,195.91 1106.47,183.91 1107.27,172.83 1108.06,162.95 1108.86,154.51 1109.65,147.72 1110.45,142.75 1111.25,139.71 1112.04,138.69 1112.84,139.71 1113.63,142.75 1114.43,147.72 1115.22,154.51 1116.02,162.95 1116.82,172.83 1117.61,183.91 1118.41,195.91 1119.20,208.55 1120.00,221.50 1120.80,221.50 1121.59,221.50 1122.39,221.50 1123.18,221.50 1123.98,221.50 1124.78,221.50 1125.57,221.50 1126.37,221.50 1127.16,221.50 1127.96,221.50 1128.75,221.50 1129.55,221.50 1130.35,221.50 1131.14,221.50 1131.94,221.50 1132.73,221.50 1133.53,221.50 1134.33,221.50 1135.12,221.50 1135.92,221.50 1136.71,221.50 1137.51,221.50 1138.30,221.50 1139.10,221.50 1139.90,221.50 1140.69,221.50 1141.49,221.50 1142.28,221.50 1143.08,221.50 1143.88,221.50 1144.67,221.50 1145.47,221.50 1146.26,221.50 1147.06,221.50 1147.85,221.50 1148.65,221.50 1149.45,221.50 1150.24,221.50 1151.04,221.50 1151.83,221.50 1152.63,221.50 1153.42,221.50 1154.22,221.50 1155.02,221.50 1155.81,221.50 1156.61,221.50 1157.40,221.50 1158.20,221.50 1159.00,221.50 1159.79,221.50 1160.59,221.50 1161.38,221.50 1162.18,221.50 1162.97,221.50 1163.77,221.50 1164.57,221.50 1165.36,221.50 1166.16,221.50 1166.95,221.50 1167.75,221.50 1168.55,221.50 1169.34,221.50 1170.14,221.50 1170.93,221.50 1171.73,221.50 1172.53,221.50 1173.32,221.50 1174.12,221.50 1174.91,221.50 1175.71,221.50 1176.50,221.50 1177.30,221.50 1178.10,221.50 1178.89,221.50 1179.69,221.50 1180.48,221.50 1181.28,221.50 1182.07,221.50 1182.87,221.50 1183.67,221.50 1184.46,221.50 1185.26,221.50 1186.05,221.50 1186.85,221.50 1187.65,221.50 1188.44,221.50 1189.24,221.50 1190.03,221.50 1190.83,221.50 1191.62,221.50 1192.42,221.50 1193.22,221.50 1194.01,221.50 1194.81,221.50 1195.60,221.50 1196.40,221.50 1197.20,221.50 1197.99,221.50 1198.79,221.50 1199.58,221.50 1200.38,221.50 1201.17,221.50 1201.97,221.50 1202.77,221.50 1203.56,221.50 1204.36,221.50 1205.15,221.50 1205.95,221.50 1206.75,221.50 1207.54,221.50 1208.34,221.50 1209.13,221.50 1209.93,221.50 1210.72,221.50 1211.52,221.50 1212.32,221.50 1213.11,221.50 1213.91,221.50 1214.70,221.50 1215.50,221.50" fill="none" stroke="#000000" stroke-width="3" stroke-linejoin="round" stroke-linecap="round" shape-rendering="crispEdges"/><text x="639.5" y="133" text-anchor="end" fill="#0000ff" font-size="10.2">2.000</text><text x="639.5" y="156" text-anchor="end" fill="#0000ff" font-size="10.2">1.500</text><text x="639.5" y="179" text-anchor="end" fill="#0000ff" font-size="10.2">1.000</text><text x="639.5" y="202" text-anchor="end" fill="#0000ff" font-size="10.2">0.500</text><text x="639.5" y="225" text-anchor="end" fill="#0000ff" font-size="10.2">0.000</text><text x="639.5" y="247" text-anchor="end" fill="#0000ff" font-size="10.2">-0.500</text><text x="639.5" y="270" text-anchor="end" fill="#0000ff" font-size="10.2">-1.000</text><text x="639.5" y="293" text-anchor="end" fill="#0000ff" font-size="10.2">-1.500</text><text x="639.5" y="316" text-anchor="end" fill="#0000ff" font-size="10.2">-2.000</text><text x="642" y="323.5" fill="#0000ff" font-size="10.4">0.000m</text><text x="706.2" y="323.5" text-anchor="middle" fill="#0000ff" font-size="10.4">40.000m</text><text x="769.8" y="323.5" text-anchor="middle" fill="#0000ff" font-size="10.4">80.000m</text><text x="833.5" y="323.5" text-anchor="middle" fill="#0000ff" font-size="10.4">120.000m</text><text x="897.2" y="323.5" text-anchor="middle" fill="#0000ff" font-size="10.4">160.000m</text><text x="960.8" y="323.5" text-anchor="middle" fill="#0000ff" font-size="10.4">200.000m</text><text x="1024.5" y="323.5" text-anchor="middle" fill="#0000ff" font-size="10.4">240.000m</text><text x="1088.2" y="323.5" text-anchor="middle" fill="#0000ff" font-size="10.4">280.000m</text><text x="1151.8" y="323.5" text-anchor="middle" fill="#0000ff" font-size="10.4">320.000m</text><text x="1215.5" y="323.5" text-anchor="middle" fill="#0000ff" font-size="10.4">360.000m</text><text x="642" y="336.5" fill="#1a1a1a" font-size="10.2">v(IN) (V)</text><text x="877.5" y="349.5" text-anchor="middle" fill="#0000ff" font-size="10.2">T (Secs)</text><line x1="674.5" y1="360" x2="674.5" y2="542" stroke="#7a7a7a" stroke-width="1" stroke-dasharray="3 3" shape-rendering="crispEdges"/><line x1="706.5" y1="360" x2="706.5" y2="542" stroke="#7a7a7a" stroke-width="1" stroke-dasharray="3 3" shape-rendering="crispEdges"/><line x1="738.5" y1="360" x2="738.5" y2="542" stroke="#7a7a7a" stroke-width="1" stroke-dasharray="3 3" shape-rendering="crispEdges"/><line x1="769.5" y1="360" x2="769.5" y2="542" stroke="#7a7a7a" stroke-width="1" stroke-dasharray="3 3" shape-rendering="crispEdges"/><line x1="801.5" y1="360" x2="801.5" y2="542" stroke="#7a7a7a" stroke-width="1" stroke-dasharray="3 3" shape-rendering="crispEdges"/><line x1="833.5" y1="360" x2="833.5" y2="542" stroke="#7a7a7a" stroke-width="1" stroke-dasharray="3 3" shape-rendering="crispEdges"/><line x1="865.5" y1="360" x2="865.5" y2="542" stroke="#7a7a7a" stroke-width="1" stroke-dasharray="3 3" shape-rendering="crispEdges"/><line x1="897.5" y1="360" x2="897.5" y2="542" stroke="#7a7a7a" stroke-width="1" stroke-dasharray="3 3" shape-rendering="crispEdges"/><line x1="929.5" y1="360" x2="929.5" y2="542" stroke="#7a7a7a" stroke-width="1" stroke-dasharray="3 3" shape-rendering="crispEdges"/><line x1="960.5" y1="360" x2="960.5" y2="542" stroke="#7a7a7a" stroke-width="1" stroke-dasharray="3 3" shape-rendering="crispEdges"/><line x1="992.5" y1="360" x2="992.5" y2="542" stroke="#7a7a7a" stroke-width="1" stroke-dasharray="3 3" shape-rendering="crispEdges"/><line x1="1024.5" y1="360" x2="1024.5" y2="542" stroke="#7a7a7a" stroke-width="1" stroke-dasharray="3 3" shape-rendering="crispEdges"/><line x1="1056.5" y1="360" x2="1056.5" y2="542" stroke="#7a7a7a" stroke-width="1" stroke-dasharray="3 3" shape-rendering="crispEdges"/><line x1="1088.5" y1="360" x2="1088.5" y2="542" stroke="#7a7a7a" stroke-width="1" stroke-dasharray="3 3" shape-rendering="crispEdges"/><line x1="1120.5" y1="360" x2="1120.5" y2="542" stroke="#7a7a7a" stroke-width="1" stroke-dasharray="3 3" shape-rendering="crispEdges"/><line x1="1151.5" y1="360" x2="1151.5" y2="542" stroke="#7a7a7a" stroke-width="1" stroke-dasharray="3 3" shape-rendering="crispEdges"/><line x1="1183.5" y1="360" x2="1183.5" y2="542" stroke="#7a7a7a" stroke-width="1" stroke-dasharray="3 3" shape-rendering="crispEdges"/><line x1="643" y1="382.5" x2="1215" y2="382.5" stroke="#7a7a7a" stroke-width="1" stroke-dasharray="3 3" shape-rendering="crispEdges"/><line x1="643" y1="405.5" x2="1215" y2="405.5" stroke="#7a7a7a" stroke-width="1" stroke-dasharray="3 3" shape-rendering="crispEdges"/><line x1="643" y1="428.5" x2="1215" y2="428.5" stroke="#7a7a7a" stroke-width="1" stroke-dasharray="3 3" shape-rendering="crispEdges"/><line x1="643" y1="451.5" x2="1215" y2="451.5" stroke="#7a7a7a" stroke-width="1" stroke-dasharray="3 3" shape-rendering="crispEdges"/><line x1="643" y1="473.5" x2="1215" y2="473.5" stroke="#7a7a7a" stroke-width="1" stroke-dasharray="3 3" shape-rendering="crispEdges"/><line x1="643" y1="496.5" x2="1215" y2="496.5" stroke="#7a7a7a" stroke-width="1" stroke-dasharray="3 3" shape-rendering="crispEdges"/><line x1="643" y1="519.5" x2="1215" y2="519.5" stroke="#7a7a7a" stroke-width="1" stroke-dasharray="3 3" shape-rendering="crispEdges"/><rect x="642.5" y="359.5" width="573" height="183" fill="none" stroke="#808080" stroke-width="1" shape-rendering="crispEdges"/><rect x="643" y="451" width="572" height="1" fill="#0000ff"/><polyline points="642.50,460.19 643.30,460.19 644.09,460.19 644.89,460.19 645.68,460.19 646.48,460.19 647.27,460.19 648.07,460.19 648.87,460.19 649.66,460.19 650.46,460.19 651.25,460.19 652.05,460.19 652.85,460.19 653.64,460.19 654.44,460.19 655.23,460.19 656.03,460.19 656.83,460.19 657.62,460.19 658.42,460.19 659.21,460.19 660.01,460.19 660.80,460.19 661.60,460.19 662.40,460.19 663.19,460.19 663.99,460.19 664.78,460.19 665.58,460.19 666.38,460.19 667.17,460.19 667.97,460.19 668.76,460.19 669.56,460.19 670.35,460.19 671.15,460.19 671.95,460.19 672.74,460.19 673.54,460.19 674.33,460.19 675.13,449.86 675.92,439.80 676.72,430.27 677.52,421.51 678.31,413.76 679.11,407.21 679.90,402.04 680.70,398.39 681.50,395.83 682.29,394.96 683.09,395.79 683.88,398.31 684.68,402.45 685.48,408.11 686.27,415.15 687.07,423.40 687.86,432.66 688.66,442.68 689.45,453.24 690.25,464.06 691.05,474.88 691.84,485.44 692.64,495.46 693.43,504.72 694.23,512.97 695.02,520.01 695.82,525.67 696.62,529.81 697.41,532.33 698.21,533.16 699.00,532.25 699.80,529.66 700.60,525.44 701.39,519.70 702.19,512.58 702.98,504.25 703.78,494.92 704.58,484.81 705.37,474.18 706.17,463.28 706.96,452.38 707.76,441.75 708.55,431.64 709.35,422.31 710.15,413.98 710.94,406.86 711.74,401.12 712.53,396.90 713.33,394.31 714.12,393.40 714.92,394.24 715.72,396.77 716.51,400.92 717.31,406.59 718.10,413.64 718.90,421.90 719.70,431.16 720.49,441.20 721.29,451.76 722.08,462.59 722.88,473.43 723.67,483.99 724.47,494.03 725.27,503.29 726.06,511.55 726.86,518.60 727.65,524.27 728.45,528.42 729.25,530.95 730.04,531.79 730.84,530.90 731.63,528.33 732.43,524.13 733.23,518.42 734.02,511.32 734.82,503.01 735.61,493.71 736.41,483.62 737.20,473.01 738.00,462.14 738.80,451.26 739.59,440.65 740.39,430.57 741.18,421.26 741.98,412.95 742.77,405.86 743.57,400.14 744.37,395.94 745.16,393.37 745.96,392.48 746.75,393.35 747.55,395.90 748.35,400.07 749.14,405.77 749.94,412.84 750.73,421.12 751.53,430.41 752.33,440.47 753.12,451.05 753.92,461.91 754.71,472.76 755.51,483.35 756.30,493.41 757.10,502.69 757.90,510.98 758.69,518.05 759.49,523.74 760.28,527.92 761.08,530.47 761.88,531.33 762.67,530.45 763.47,527.87 764.26,523.68 765.06,517.96 765.85,510.86 766.65,502.56 767.45,493.25 768.24,483.17 769.04,472.56 769.83,461.68 770.63,450.80 771.42,440.19 772.22,430.11 773.02,420.80 773.81,412.50 774.61,405.40 775.40,399.68 776.20,395.49 777.00,392.91 777.79,392.02 778.59,392.87 779.38,395.39 780.18,399.55 780.98,405.22 781.77,412.27 782.57,420.53 783.36,429.79 784.16,439.83 784.95,450.39 785.75,461.22 786.55,472.05 787.34,482.62 788.14,492.65 788.93,501.92 789.73,510.18 790.52,517.23 791.32,522.90 792.12,527.05 792.91,529.58 793.71,530.42 794.50,529.54 795.30,526.98 796.10,522.80 796.89,517.09 797.69,510.00 798.48,501.71 799.28,492.41 800.08,482.34 800.87,471.74 801.67,460.88 802.46,450.01 803.26,439.41 804.05,429.34 804.85,420.05 805.65,411.75 806.44,404.67 807.24,398.96 808.03,394.78 808.83,392.21 809.62,391.34 810.42,392.19 811.22,394.73 812.01,398.89 812.81,404.58 813.60,411.64 814.40,419.91 815.20,429.18 815.99,439.23 816.79,449.81 817.58,460.65 818.38,471.49 819.17,482.07 819.97,492.12 820.77,501.39 821.56,509.66 822.36,516.72 823.15,522.41 823.95,526.57 824.75,529.11 825.54,529.96 826.34,528.70 827.13,525.75 827.93,521.17 828.73,515.08 829.52,507.60 830.32,498.92 831.11,489.23 831.91,478.77 832.70,467.79 833.50,456.53 834.30,456.55 835.09,456.56 835.89,456.58 836.68,456.60 837.48,456.61 838.27,456.63 839.07,456.64 839.87,456.66 840.66,456.67 841.46,456.69 842.25,456.71 843.05,456.72 843.85,456.74 844.64,456.75 845.44,456.77 846.23,456.78 847.03,456.80 847.83,456.82 848.62,456.83 849.42,456.85 850.21,456.86 851.01,456.88 851.80,456.89 852.60,456.91 853.40,456.93 854.19,456.94 854.99,456.96 855.78,456.97 856.58,456.99 857.38,457.00 858.17,457.02 858.97,457.04 859.76,457.05 860.56,457.07 861.35,457.08 862.15,457.10 862.95,457.11 863.74,457.13 864.54,457.15 865.33,457.16 866.13,457.18 866.92,457.19 867.72,457.21 868.52,457.22 869.31,457.24 870.11,457.26 870.90,457.27 871.70,457.29 872.50,457.30 873.29,457.32 874.09,457.33 874.88,457.35 875.68,457.37 876.48,457.38 877.27,457.40 878.07,457.41 878.86,457.43 879.66,457.44 880.45,457.46 881.25,457.48 882.05,457.49 882.84,457.51 883.64,457.52 884.43,457.54 885.23,457.55 886.02,457.57 886.82,457.59 887.62,457.60 888.41,457.62 889.21,457.63 890.00,457.65 890.80,457.66 891.60,457.68 892.39,457.70 893.19,457.71 893.98,457.73 894.78,457.74 895.58,457.76 896.37,457.77 897.17,457.79 897.96,457.81 898.76,457.82 899.55,457.84 900.35,457.85 901.15,457.87 901.94,457.88 902.74,457.90 903.53,457.92 904.33,457.93 905.12,457.95 905.92,457.96 906.72,457.98 907.51,458.00 908.31,458.01 909.10,458.03 909.90,458.04 910.70,458.06 911.49,458.07 912.29,458.09 913.08,458.11 913.88,458.12 914.67,458.14 915.47,458.15 916.27,458.17 917.06,458.18 917.86,458.20 918.65,458.22 919.45,458.23 920.25,458.25 921.04,458.26 921.84,458.28 922.63,458.29 923.43,458.31 924.22,458.33 925.02,458.34 925.82,458.36 926.61,458.37 927.41,458.39 928.20,458.40 929.00,458.42 929.80,458.44 930.59,458.45 931.39,458.47 932.18,458.48 932.98,458.50 933.77,458.51 934.57,458.53 935.37,458.55 936.16,458.56 936.96,458.58 937.75,458.59 938.55,458.61 939.35,458.62 940.14,458.64 940.94,458.66 941.73,458.67 942.53,458.69 943.33,458.70 944.12,458.72 944.92,458.73 945.71,458.75 946.51,458.77 947.30,458.78 948.10,458.80 948.90,458.81 949.69,458.83 950.49,458.84 951.28,458.86 952.08,458.88 952.88,458.89 953.67,458.91 954.47,458.92 955.26,458.94 956.06,458.95 956.85,458.97 957.65,458.99 958.45,459.00 959.24,459.02 960.04,459.03 960.83,459.05 961.63,469.41 962.42,479.51 963.22,489.09 964.02,497.90 964.81,505.72 965.61,512.34 966.40,517.59 967.20,521.34 968.00,523.86 968.79,524.70 969.59,523.86 970.38,521.34 971.18,517.22 971.97,511.59 972.77,504.60 973.57,496.41 974.36,487.23 975.16,477.28 975.95,466.81 976.75,456.07 977.55,445.34 978.34,434.87 979.14,424.92 979.93,415.74 980.73,407.55 981.52,400.56 982.32,394.93 983.12,390.81 983.91,388.29 984.71,387.45 985.50,388.36 986.30,390.95 987.10,395.14 987.89,400.83 988.69,407.89 989.48,416.15 990.28,425.40 991.08,435.42 991.87,445.96 992.67,456.76 993.46,467.57 994.26,478.10 995.05,488.12 995.85,497.37 996.65,505.63 997.44,512.69 998.24,518.39 999.03,522.58 999.83,525.16 1000.62,526.07 1001.42,525.22 1002.22,522.70 1003.01,518.58 1003.81,512.95 1004.60,505.95 1005.40,497.76 1006.20,488.57 1006.99,478.62 1007.79,468.14 1008.58,457.40 1009.38,446.66 1010.17,436.19 1010.97,426.23 1011.77,417.05 1012.56,408.85 1013.36,401.86 1014.15,396.22 1014.95,392.10 1015.75,389.58 1016.54,388.73 1017.34,389.57 1018.13,392.08 1018.93,396.20 1019.72,401.82 1020.52,408.81 1021.32,416.99 1022.11,426.17 1022.91,436.11 1023.70,446.58 1024.50,457.31 1025.30,468.04 1026.09,478.51 1026.89,488.45 1027.68,497.63 1028.48,505.81 1029.28,512.80 1030.07,518.42 1030.87,522.54 1031.66,525.05 1032.46,525.89 1033.25,525.04 1034.05,522.52 1034.85,518.40 1035.64,512.76 1036.44,505.77 1037.23,497.57 1038.03,488.39 1038.83,478.43 1039.62,467.96 1040.42,457.22 1041.21,446.48 1042.01,436.00 1042.80,426.05 1043.60,416.86 1044.40,408.67 1045.19,401.67 1045.99,396.04 1046.78,391.92 1047.58,389.40 1048.38,388.55 1049.17,389.39 1049.97,391.90 1050.76,396.01 1051.56,401.64 1052.35,408.62 1053.15,416.81 1053.95,425.99 1054.74,435.93 1055.54,446.40 1056.33,457.13 1057.13,467.86 1057.92,478.32 1058.72,488.27 1059.52,497.45 1060.31,505.63 1061.11,512.62 1061.90,518.24 1062.70,522.36 1063.50,524.87 1064.29,525.71 1065.09,524.86 1065.88,522.34 1066.68,518.21 1067.47,512.58 1068.27,505.58 1069.07,497.39 1069.86,488.20 1070.66,478.25 1071.45,467.78 1072.25,457.04 1073.05,446.30 1073.84,435.82 1074.64,425.87 1075.43,416.68 1076.23,408.49 1077.03,401.49 1077.82,395.86 1078.62,391.73 1079.41,389.21 1080.21,388.37 1081.00,389.28 1081.80,391.86 1082.60,396.05 1083.39,401.75 1084.19,408.81 1084.98,417.06 1085.78,426.32 1086.58,436.33 1087.37,446.87 1088.17,457.68 1088.96,468.48 1089.76,479.02 1090.55,489.04 1091.35,498.29 1092.15,506.54 1092.94,513.61 1093.74,519.30 1094.53,523.49 1095.33,526.07 1096.12,526.99 1096.92,526.19 1097.72,523.72 1098.51,519.65 1099.31,514.06 1100.10,507.12 1100.90,498.97 1101.70,489.84 1102.49,479.93 1103.29,469.51 1104.08,458.82 1104.88,448.13 1105.67,437.71 1106.47,427.80 1107.27,418.67 1108.06,410.52 1108.86,403.58 1109.65,397.99 1110.45,393.92 1111.25,391.45 1112.04,390.65 1112.84,391.89 1113.63,394.79 1114.43,399.30 1115.22,405.31 1116.02,412.70 1116.82,421.27 1117.61,430.84 1118.41,441.18 1119.20,452.04 1120.00,463.17 1120.80,462.94 1121.59,462.94 1122.39,462.94 1123.18,462.94 1123.98,462.94 1124.78,462.94 1125.57,462.94 1126.37,462.94 1127.16,462.94 1127.96,462.94 1128.75,462.94 1129.55,462.94 1130.35,462.94 1131.14,462.94 1131.94,462.94 1132.73,462.94 1133.53,462.94 1134.33,462.94 1135.12,462.94 1135.92,462.94 1136.71,462.94 1137.51,462.94 1138.30,462.94 1139.10,462.94 1139.90,462.94 1140.69,462.94 1141.49,462.94 1142.28,462.94 1143.08,462.94 1143.88,462.94 1144.67,462.94 1145.47,462.94 1146.26,462.94 1147.06,462.94 1147.85,462.94 1148.65,462.94 1149.45,462.94 1150.24,462.94 1151.04,462.94 1151.83,462.94 1152.63,462.94 1153.42,462.94 1154.22,462.94 1155.02,462.94 1155.81,462.94 1156.61,462.94 1157.40,462.94 1158.20,462.94 1159.00,462.94 1159.79,462.94 1160.59,462.94 1161.38,462.94 1162.18,462.94 1162.97,462.94 1163.77,462.94 1164.57,462.94 1165.36,462.94 1166.16,462.94 1166.95,462.94 1167.75,462.94 1168.55,462.94 1169.34,462.94 1170.14,462.94 1170.93,462.94 1171.73,462.94 1172.53,462.94 1173.32,462.94 1174.12,462.94 1174.91,462.94 1175.71,462.94 1176.50,462.94 1177.30,462.94 1178.10,462.94 1178.89,462.94 1179.69,462.94 1180.48,462.94 1181.28,462.94 1182.07,462.94 1182.87,462.94 1183.67,461.56 1184.46,461.56 1185.26,461.56 1186.05,461.56 1186.85,461.56 1187.65,461.56 1188.44,461.56 1189.24,461.56 1190.03,461.56 1190.83,461.56 1191.62,461.56 1192.42,461.56 1193.22,461.56 1194.01,461.56 1194.81,461.56 1195.60,461.56 1196.40,461.56 1197.20,461.56 1197.99,461.56 1198.79,461.56 1199.58,461.56 1200.38,461.56 1201.17,461.56 1201.97,461.56 1202.77,461.56 1203.56,461.56 1204.36,461.56 1205.15,461.56 1205.95,461.56 1206.75,461.56 1207.54,461.56 1208.34,461.56 1209.13,461.56 1209.93,461.56 1210.72,461.56 1211.52,461.56 1212.32,461.56 1213.11,461.56 1213.91,461.56 1214.70,461.56 1215.50,461.56" fill="none" stroke="#ff0000" stroke-width="3" stroke-linejoin="round" stroke-linecap="round" shape-rendering="crispEdges"/><text x="639.5" y="363" text-anchor="end" fill="#0000ff" font-size="10.2">2.000</text><text x="639.5" y="386" text-anchor="end" fill="#0000ff" font-size="10.2">1.500</text><text x="639.5" y="409" text-anchor="end" fill="#0000ff" font-size="10.2">1.000</text><text x="639.5" y="432" text-anchor="end" fill="#0000ff" font-size="10.2">0.500</text><text x="639.5" y="455" text-anchor="end" fill="#0000ff" font-size="10.2">0.000</text><text x="639.5" y="477" text-anchor="end" fill="#0000ff" font-size="10.2">-0.500</text><text x="639.5" y="500" text-anchor="end" fill="#0000ff" font-size="10.2">-1.000</text><text x="639.5" y="523" text-anchor="end" fill="#0000ff" font-size="10.2">-1.500</text><text x="639.5" y="546" text-anchor="end" fill="#0000ff" font-size="10.2">-2.000</text><text x="642" y="553.5" fill="#0000ff" font-size="10.4">0.000m</text><text x="706.2" y="553.5" text-anchor="middle" fill="#0000ff" font-size="10.4">40.000m</text><text x="769.8" y="553.5" text-anchor="middle" fill="#0000ff" font-size="10.4">80.000m</text><text x="833.5" y="553.5" text-anchor="middle" fill="#0000ff" font-size="10.4">120.000m</text><text x="897.2" y="553.5" text-anchor="middle" fill="#0000ff" font-size="10.4">160.000m</text><text x="960.8" y="553.5" text-anchor="middle" fill="#0000ff" font-size="10.4">200.000m</text><text x="1024.5" y="553.5" text-anchor="middle" fill="#0000ff" font-size="10.4">240.000m</text><text x="1088.2" y="553.5" text-anchor="middle" fill="#0000ff" font-size="10.4">280.000m</text><text x="1151.8" y="553.5" text-anchor="middle" fill="#0000ff" font-size="10.4">320.000m</text><text x="1215.5" y="553.5" text-anchor="middle" fill="#0000ff" font-size="10.4">360.000m</text><text x="642" y="566.5" fill="#ff0000" font-size="10.2">v(OUT) (V)</text><rect x="642" y="568" width="49" height="1" fill="#ff0000"/><text x="877.5" y="579.5" text-anchor="middle" fill="#0000ff" font-size="10.2">T (Secs)</text></svg></div>
<svg width="1252" height="614" style="position:absolute;left:0;top:0"><defs><pattern id="chk2" width="2" height="2" patternUnits="userSpaceOnUse"><rect width="2" height="2" fill="#fcfcfc"/><rect width="1" height="1" fill="#e8e8e8"/><rect x="1" y="1" width="1" height="1" fill="#e8e8e8"/></pattern></defs><rect x="574" y="116" width="16" height="471" fill="url(#chk2)"/><rect x="574" y="116" width="16" height="3" fill="#fff"/><rect x="574" y="119" width="16" height="1" fill="#a0a0a0"/><rect x="574" y="120" width="16" height="1" fill="#696969"/><rect x="574" y="121" width="16" height="17" fill="#696969"/><rect x="574" y="121" width="15" height="16" fill="#ffffff"/><rect x="575" y="122" width="14" height="15" fill="#a0a0a0"/><rect x="575" y="122" width="13" height="14" fill="#f0f0f0"/><path d="M577.5 133h9l-4.5-5z" fill="#000"/><rect x="574" y="138" width="16" height="81" fill="#696969"/><rect x="574" y="138" width="15" height="80" fill="#ffffff"/><rect x="575" y="139" width="14" height="79" fill="#a0a0a0"/><rect x="575" y="139" width="13" height="78" fill="#f0f0f0"/><rect x="574" y="571" width="16" height="16" fill="#696969"/><rect x="574" y="571" width="15" height="15" fill="#ffffff"/><rect x="575" y="572" width="14" height="14" fill="#a0a0a0"/><rect x="575" y="572" width="13" height="13" fill="#f0f0f0"/><path d="M577.5 576h9l-4.5 5z" fill="#000"/><rect x="590" y="116" width="1" height="488" fill="#fafafa"/><rect x="10" y="587" width="564" height="16" fill="#f0f0f0"/><rect x="13" y="587" width="67" height="16" fill="#696969"/><rect x="15" y="588" width="15" height="14" fill="#a0a0a0"/><rect x="15" y="588" width="14" height="13" fill="#fff"/><rect x="16" y="589" width="13" height="12" fill="#f0f0f0"/><rect x="31" y="588" width="15" height="14" fill="#a0a0a0"/><rect x="31" y="588" width="14" height="13" fill="#fff"/><rect x="32" y="589" width="13" height="12" fill="#f0f0f0"/><rect x="47" y="588" width="15" height="14" fill="#a0a0a0"/><rect x="47" y="588" width="14" height="13" fill="#fff"/><rect x="48" y="589" width="13" height="12" fill="#f0f0f0"/><rect x="63" y="588" width="15" height="14" fill="#a0a0a0"/><rect x="63" y="588" width="14" height="13" fill="#fff"/><rect x="64" y="589" width="13" height="12" fill="#f0f0f0"/><path d="M19 591h2v8h-2zM21 595l5-4v8z" fill="#000"/><path d="M36 595l5-4v8z" fill="#000"/><path d="M52 591l5 4l-5 4z" fill="#000"/><path d="M67 591l5 4l-5 4zM72 591h2v8h-2z" fill="#000"/><rect x="80" y="587" width="357" height="1" fill="#000"/><rect x="80" y="602" width="357" height="1" fill="#a0a0a0"/><path d="M79.5 587.5L87.5 602.5H115L122 588V588Z" fill="#fff"/><path d="M79.5 587.5L87.5 602.5M115.5 602.5L122.5 587.5" stroke="#000" stroke-width="1.1" fill="none"/><path d="M150.5 587.5L157.5 602.5M149.5 602.5L153.5 594.5" stroke="#000" stroke-width="1.1" fill="none"/><path d="M199.5 587.5L206.5 602.5M198.5 602.5L202.5 594.5" stroke="#000" stroke-width="1.1" fill="none"/><path d="M295.5 587.5L302.5 602.5M294.5 602.5L298.5 594.5" stroke="#000" stroke-width="1.1" fill="none"/><path d="M119.5 595L123 602.5" stroke="#000" stroke-width="1.1" fill="none"/><path d="M325.5 602.5L332.5 587.5" stroke="#000" stroke-width="1.1" fill="none"/><text x="88" y="599" font-size="11.6" font-weight="bold" fill="#000" font-family="'Liberation Sans', sans-serif">Main</text><text x="125" y="599" font-size="10.5" fill="#000" font-family="'Liberation Sans', sans-serif">Text</text><text x="161" y="599" font-size="10.5" fill="#000" font-family="'Liberation Sans', sans-serif">Models</text><text x="213.5" y="599" font-size="10.5" fill="#000" font-family="'Liberation Sans', sans-serif">Power Supplies</text><text x="305" y="599" font-size="10.5" fill="#000" font-family="'Liberation Sans', sans-serif">Info</text><rect x="436" y="587" width="1" height="16" fill="#000"/><rect x="437" y="587" width="3" height="16" fill="#fff"/><rect x="440" y="587" width="1" height="16" fill="#a0a0a0"/><rect x="441" y="587" width="133" height="16" fill="url(#chk2)"/><rect x="441" y="587" width="17" height="16" fill="#696969"/><rect x="441" y="587" width="16" height="15" fill="#ffffff"/><rect x="442" y="588" width="15" height="14" fill="#a0a0a0"/><rect x="442" y="588" width="14" height="13" fill="#f0f0f0"/><path d="M452 591v8l-5-4z" fill="#000"/><rect x="458" y="587" width="26" height="16" fill="#696969"/><rect x="458" y="587" width="25" height="15" fill="#ffffff"/><rect x="459" y="588" width="24" height="14" fill="#a0a0a0"/><rect x="459" y="588" width="23" height="13" fill="#f0f0f0"/><rect x="559" y="587" width="15" height="16" fill="#696969"/><rect x="559" y="587" width="14" height="15" fill="#ffffff"/><rect x="560" y="588" width="13" height="14" fill="#a0a0a0"/><rect x="560" y="588" width="12" height="13" fill="#f0f0f0"/><path d="M564 591v8l5-4z" fill="#000"/><rect x="574" y="587" width="16" height="17" fill="#f0f0f0"/><rect x="574" y="587" width="16" height="1" fill="#696969"/><rect x="574" y="587" width="1" height="17" fill="#696969"/><rect x="575" y="588" width="1" height="15" fill="#a0a0a0"/><rect x="603" y="587" width="640" height="17" fill="#f0f0f0"/><rect x="603" y="587" width="1" height="16" fill="#a0a0a0"/><rect x="604" y="587" width="1" height="16" fill="#696969"/><rect x="605" y="587" width="6" height="16" fill="#fff"/><rect x="606" y="588" width="5" height="14" fill="#f0f0f0"/><rect x="610" y="588" width="1" height="15" fill="#a0a0a0"/><rect x="611" y="586" width="81" height="16" fill="#696969"/><rect x="603" y="601" width="8" height="2" fill="#696969"/><rect x="612" y="587" width="15" height="14" fill="#a0a0a0"/><rect x="612" y="587" width="14" height="13" fill="#fff"/><rect x="613" y="588" width="13" height="12" fill="#f0f0f0"/><rect x="628" y="587" width="15" height="14" fill="#a0a0a0"/><rect x="628" y="587" width="14" height="13" fill="#fff"/><rect x="629" y="588" width="13" height="12" fill="#f0f0f0"/><rect x="644" y="587" width="15" height="14" fill="#a0a0a0"/><rect x="644" y="587" width="14" height="13" fill="#fff"/><rect x="645" y="588" width="13" height="12" fill="#f0f0f0"/><rect x="660" y="587" width="15" height="14" fill="#a0a0a0"/><rect x="660" y="587" width="14" height="13" fill="#fff"/><rect x="661" y="588" width="13" height="12" fill="#f0f0f0"/><rect x="676" y="587" width="15" height="14" fill="#a0a0a0"/><rect x="676" y="587" width="14" height="13" fill="#fff"/><rect x="677" y="588" width="13" height="12" fill="#f0f0f0"/><path d="M616.5 594h5l-2.5 2.5z" fill="#000"/><path d="M631 590h1.2v8h-1.2zM632.5 594l5-4v8z" fill="#000"/><path d="M648 594l5-4v8z" fill="#000"/><path d="M665 590l5 4l-5 4z" fill="#000"/><path d="M680.5 590l5 4l-5 4zM685.8 590h1.2v8h-1.2z" fill="#000"/><path d="M692.5 587.5L700.5 602.5H728L736 587.5Z" fill="#fff"/><path d="M692.5 587.5L700.5 602.5M728.5 602.5L736.5 587.5" stroke="#000" stroke-width="1.1" fill="none"/><rect x="736" y="586" width="489" height="1" fill="#000"/><text x="701" y="599" font-size="11.6" font-weight="bold" fill="#000" font-family="'Liberation Sans', sans-serif">Main</text><rect x="1225" y="586" width="17" height="7" fill="#696969"/><rect x="1225" y="586" width="16" height="6" fill="#ffffff"/><rect x="1226" y="587" width="15" height="5" fill="#a0a0a0"/><rect x="1226" y="587" width="14" height="4" fill="#f0f0f0"/><rect x="1243" y="31" width="1" height="574" fill="#fff"/><rect x="603" y="604" width="641" height="1" fill="#fff"/><rect x="591" y="31" width="1" height="573" fill="#fff"/><rect x="8" y="603" width="584" height="1" fill="#fff"/></svg>
</body></html>
